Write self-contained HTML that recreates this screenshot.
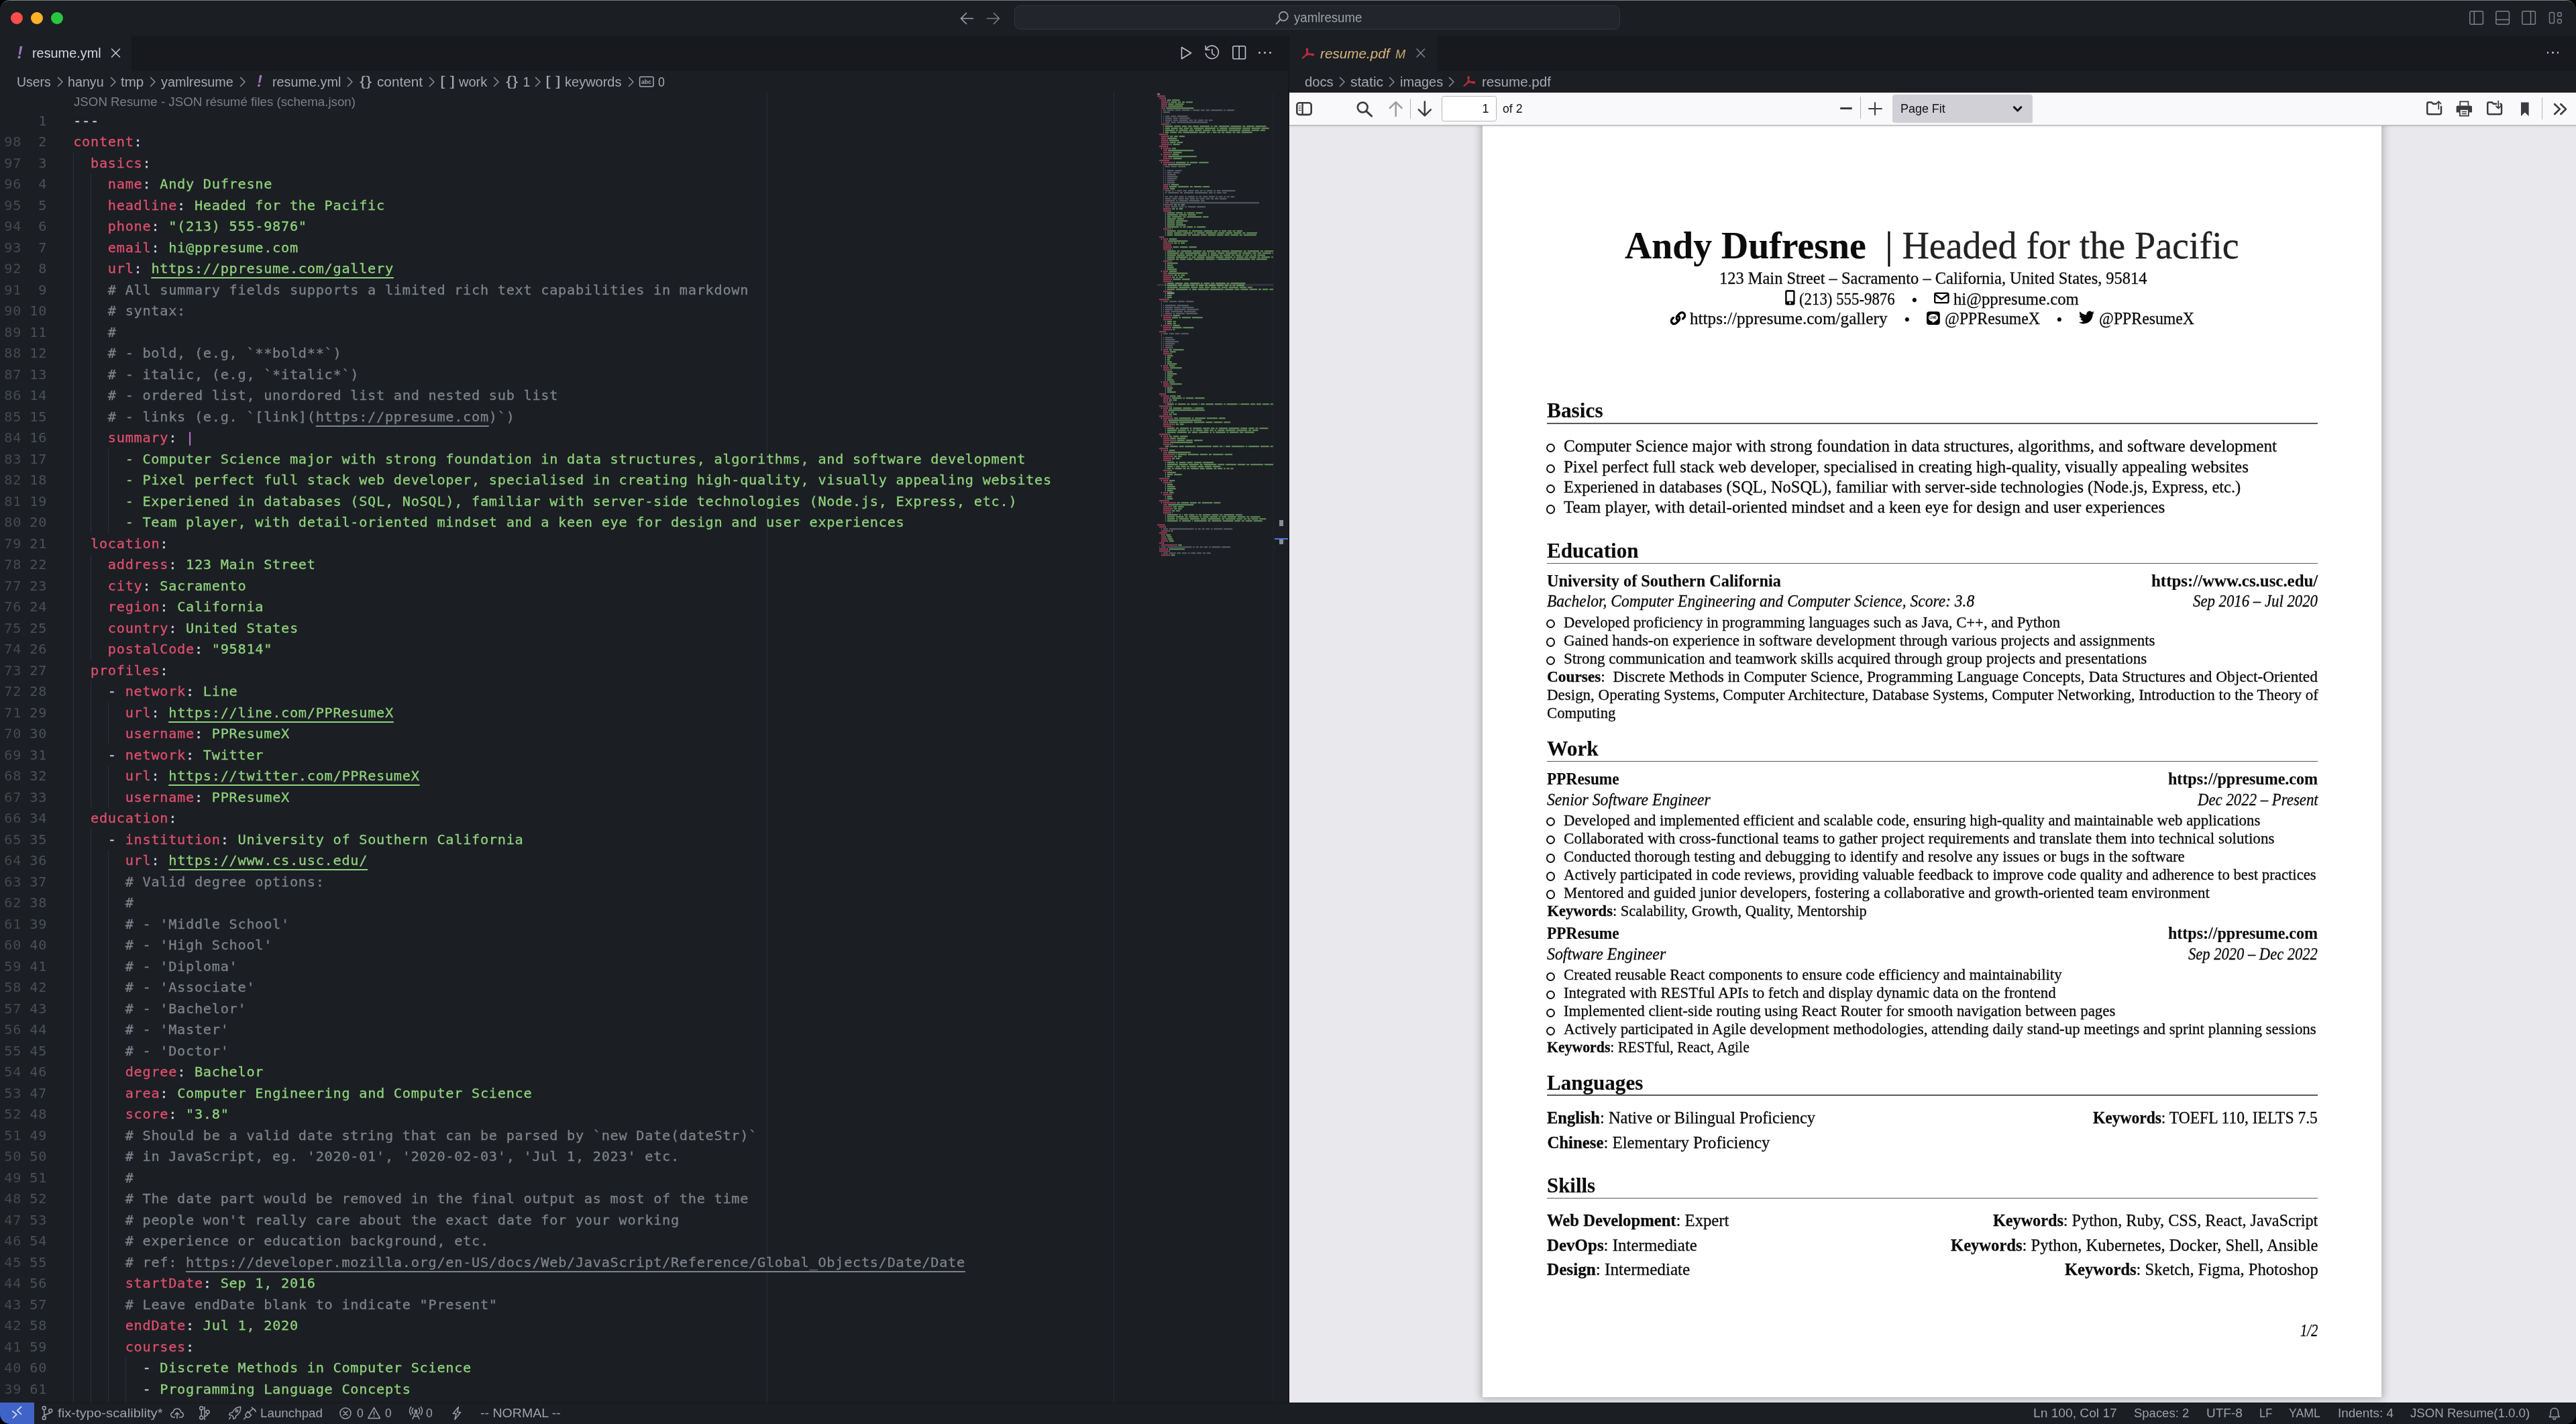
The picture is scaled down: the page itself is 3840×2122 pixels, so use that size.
<!DOCTYPE html><html><head><meta charset="utf-8"><title>resume.yml — yamlresume</title><style>
html,body{margin:0;padding:0;background:#000;}
body{width:3840px;height:2122px;overflow:hidden;position:relative;}
#win{position:absolute;left:0;top:0;width:3840px;height:2122px;background:#1b1e23;overflow:hidden;border-radius:15px;will-change:transform;}
.t{position:absolute;white-space:pre;margin:0;padding:0;}
.bl{display:inline-block;width:0;height:0;vertical-align:baseline;}
.cl{position:absolute;left:109.2px;white-space:pre;height:31.5px;line-height:31.5px;-webkit-text-stroke:0.3px;}
.ln{position:absolute;white-space:pre;height:31.5px;line-height:31.5px;text-align:right;}
.k{color:#df4f6e}.s{color:#8fd27c}.p{color:#cdd1d9}.c{color:#7e828b}.u{text-decoration:underline;text-underline-offset:5.5px;text-decoration-thickness:1.5px}.m{color:#c678dd}

</style></head><body><div id="win">
<div style="position:absolute;left:0px;top:52.5px;width:3840px;height:53.0px;background:#17191e;"></div>
<div style="position:absolute;left:0px;top:52.5px;width:196px;height:53.0px;background:#1b1e23;"></div>
<div style="position:absolute;left:1921.5px;top:52.5px;width:220.5px;height:53.0px;background:#1b1e23;"></div>
<div style="position:absolute;left:1920.0px;top:52.5px;width:1.5px;height:2037.0px;background:#15171c;"></div>
<div style="position:absolute;left:1512px;top:8px;width:902.5px;height:35.5px;box-sizing:border-box;border:1.5px solid #32353c;border-radius:9px;background:#22252c"></div>
<div style="position:absolute;left:16.1px;top:18.2px;width:18px;height:18px;border-radius:50%;background:#fd4c49"></div>
<div style="position:absolute;left:46.3px;top:18.2px;width:18px;height:18px;border-radius:50%;background:#fdb325"></div>
<div style="position:absolute;left:76.2px;top:18.2px;width:18px;height:18px;border-radius:50%;background:#29c73c"></div>
<svg style="position:absolute;left:1428px;top:15px;" width="30" height="26" viewBox="0 0 30 26"><path d="M22.5 12.5H5M12.5 4.5L4.5 12.5L12.5 20.5" fill="none" stroke="#9da1a9" stroke-width="1.7" stroke-linecap="round" stroke-linejoin="round" /></svg>
<svg style="position:absolute;left:1467px;top:15px;" width="30" height="26" viewBox="0 0 30 26"><path d="M4.5 12.5H22M14.5 4.5L22.5 12.5L14.5 20.5" fill="none" stroke="#797d85" stroke-width="1.7" stroke-linecap="round" stroke-linejoin="round" /></svg>
<svg style="position:absolute;left:1898px;top:13px;" width="28" height="28" viewBox="0 0 28 28"><circle cx="15.3" cy="11.3" r="6.6" fill="none" stroke="#9da1a9" stroke-width="1.7"/><path d="M10.6 16L4.6 22.6" stroke="#9da1a9" stroke-width="1.9" stroke-linecap="round"/></svg>
<svg style="position:absolute;left:3679px;top:14px;" width="26" height="26" viewBox="0 0 26 26"><rect x="2.8" y="2.7" width="19.6" height="19.6" rx="2.2" fill="none" stroke="#7c8088" stroke-width="1.5"/><path d="M9.3 2.7V22.3" stroke="#7c8088" stroke-width="1.5"/></svg>
<svg style="position:absolute;left:3718px;top:14px;" width="26" height="26" viewBox="0 0 26 26"><rect x="2.8" y="2.7" width="19.6" height="19.6" rx="2.2" fill="none" stroke="#7c8088" stroke-width="1.5"/><path d="M2.8 15.4H22.4" stroke="#7c8088" stroke-width="1.5"/></svg>
<svg style="position:absolute;left:3757px;top:14px;" width="26" height="26" viewBox="0 0 26 26"><rect x="2.8" y="2.7" width="19.6" height="19.6" rx="2.2" fill="none" stroke="#7c8088" stroke-width="1.5"/><path d="M15.5 2.7V22.3" stroke="#7c8088" stroke-width="1.5"/></svg>
<svg style="position:absolute;left:3796px;top:14px;" width="26" height="26" viewBox="0 0 26 26"><rect x="4.5" y="4.5" width="7" height="16" rx="1.8" fill="none" stroke="#7c8088" stroke-width="1.5"/><rect x="16.6" y="4.7" width="5.6" height="5.6" rx="1.6" fill="none" stroke="#7c8088" stroke-width="1.5"/><rect x="16.6" y="14.8" width="5.6" height="5.6" rx="1.6" fill="none" stroke="#7c8088" stroke-width="1.5"/></svg>
<svg style="position:absolute;left:164px;top:70px;" width="18" height="18" viewBox="0 0 18 18"><path d="M2.5 3L14.5 15M14.5 3L2.5 15" fill="none" stroke="#c8ccd4" stroke-width="1.5" stroke-linecap="round" stroke-linejoin="round" /></svg>
<svg style="position:absolute;left:1757px;top:66px;" width="24" height="26" viewBox="0 0 24 26"><path d="M4.5 4.5L18.5 13L4.5 21.5Z" fill="none" stroke="#c0c4cc" stroke-width="1.6" stroke-linecap="round" stroke-linejoin="round" /></svg>
<svg style="position:absolute;left:1793px;top:66px;" width="28" height="26" viewBox="0 0 28 26"><path d="M5.2 7.5A9.6 9.6 0 1 1 4.4 13.8" fill="none" stroke="#c0c4cc" stroke-width="1.6" stroke-linecap="round"/><path d="M4.3 2.6V8.3H10" fill="none" stroke="#c0c4cc" stroke-width="1.6" stroke-linecap="round" stroke-linejoin="round"/><path d="M13.8 7.5V13.5L17.6 16.6" fill="none" stroke="#c0c4cc" stroke-width="1.6" stroke-linecap="round" stroke-linejoin="round"/></svg>
<svg style="position:absolute;left:1835px;top:66px;" width="24" height="26" viewBox="0 0 24 26"><rect x="2.9" y="2.8" width="18.6" height="19" rx="2" fill="none" stroke="#c0c4cc" stroke-width="1.6"/><path d="M12.2 2.8V21.8" stroke="#c0c4cc" stroke-width="1.6"/></svg>
<div style="position:absolute;left:1876.0px;top:77.0px;width:3px;height:3px;border-radius:50%;background:#c0c4cc"></div>
<div style="position:absolute;left:1883.8px;top:77.0px;width:3px;height:3px;border-radius:50%;background:#c0c4cc"></div>
<div style="position:absolute;left:1891.7px;top:77.0px;width:3px;height:3px;border-radius:50%;background:#c0c4cc"></div>
<svg style="position:absolute;left:83.5px;top:112.5px;" width="12" height="18" viewBox="0 0 12 18"><path d="M2.5 2.5L9 9L2.5 15.5" fill="none" stroke="#8b8f97" stroke-width="1.5" stroke-linecap="round" stroke-linejoin="round" /></svg>
<svg style="position:absolute;left:162.5px;top:112.5px;" width="12" height="18" viewBox="0 0 12 18"><path d="M2.5 2.5L9 9L2.5 15.5" fill="none" stroke="#8b8f97" stroke-width="1.5" stroke-linecap="round" stroke-linejoin="round" /></svg>
<svg style="position:absolute;left:221.6px;top:112.5px;" width="12" height="18" viewBox="0 0 12 18"><path d="M2.5 2.5L9 9L2.5 15.5" fill="none" stroke="#8b8f97" stroke-width="1.5" stroke-linecap="round" stroke-linejoin="round" /></svg>
<svg style="position:absolute;left:355.8px;top:112.5px;" width="12" height="18" viewBox="0 0 12 18"><path d="M2.5 2.5L9 9L2.5 15.5" fill="none" stroke="#8b8f97" stroke-width="1.5" stroke-linecap="round" stroke-linejoin="round" /></svg>
<svg style="position:absolute;left:515.8px;top:112.5px;" width="12" height="18" viewBox="0 0 12 18"><path d="M2.5 2.5L9 9L2.5 15.5" fill="none" stroke="#8b8f97" stroke-width="1.5" stroke-linecap="round" stroke-linejoin="round" /></svg>
<svg style="position:absolute;left:638px;top:112.5px;" width="12" height="18" viewBox="0 0 12 18"><path d="M2.5 2.5L9 9L2.5 15.5" fill="none" stroke="#8b8f97" stroke-width="1.5" stroke-linecap="round" stroke-linejoin="round" /></svg>
<svg style="position:absolute;left:734.4px;top:112.5px;" width="12" height="18" viewBox="0 0 12 18"><path d="M2.5 2.5L9 9L2.5 15.5" fill="none" stroke="#8b8f97" stroke-width="1.5" stroke-linecap="round" stroke-linejoin="round" /></svg>
<svg style="position:absolute;left:795.5px;top:112.5px;" width="12" height="18" viewBox="0 0 12 18"><path d="M2.5 2.5L9 9L2.5 15.5" fill="none" stroke="#8b8f97" stroke-width="1.5" stroke-linecap="round" stroke-linejoin="round" /></svg>
<svg style="position:absolute;left:934.6px;top:112.5px;" width="12" height="18" viewBox="0 0 12 18"><path d="M2.5 2.5L9 9L2.5 15.5" fill="none" stroke="#8b8f97" stroke-width="1.5" stroke-linecap="round" stroke-linejoin="round" /></svg>
<svg style="position:absolute;left:952px;top:111px;" width="24" height="22" viewBox="0 0 24 22"><rect x="1.6" y="3.4" width="20.4" height="14.6" rx="2" fill="none" stroke="#a6a9b0" stroke-width="1.5"/><text x="4" y="13.6" font-family="Liberation Sans" font-weight="700" font-size="8.5" fill="#a6a9b0">abc</text></svg>
<svg style="position:absolute;left:1939.5px;top:69.5px;" width="20.0" height="19.0" viewBox="0 0 20 19"><path d="M2 16.5C5.5 14.5 8.2 9.5 9.3 4.2C9.7 2 7.6 1.6 7.5 3.6C7.3 7.5 11.5 11.8 16.6 12.4C19 12.6 19 10.6 16.8 10.5C11.5 10.3 5.5 12.6 2.6 15.4C1.2 16.8 1.2 17.2 2 16.5Z" fill="none" stroke="#bd2b3b" stroke-width="1.9" stroke-linejoin="round" stroke-linecap="round"/></svg>
<svg style="position:absolute;left:2108.5px;top:70px;" width="18" height="18" viewBox="0 0 18 18"><path d="M3 3L14.6 15M14.6 3L3 15" fill="none" stroke="#7e828b" stroke-width="1.5" stroke-linecap="round" stroke-linejoin="round" /></svg>
<div style="position:absolute;left:3796.6px;top:77.39999999999999px;width:2.8px;height:2.8px;border-radius:50%;background:#c0c4cc"></div>
<div style="position:absolute;left:3804.1px;top:77.39999999999999px;width:2.8px;height:2.8px;border-radius:50%;background:#c0c4cc"></div>
<div style="position:absolute;left:3811.6px;top:77.39999999999999px;width:2.8px;height:2.8px;border-radius:50%;background:#c0c4cc"></div>
<svg style="position:absolute;left:1994.8px;top:112.5px;" width="12" height="18" viewBox="0 0 12 18"><path d="M2.5 2.5L9 9L2.5 15.5" fill="none" stroke="#8b8f97" stroke-width="1.5" stroke-linecap="round" stroke-linejoin="round" /></svg>
<svg style="position:absolute;left:2068.9px;top:112.5px;" width="12" height="18" viewBox="0 0 12 18"><path d="M2.5 2.5L9 9L2.5 15.5" fill="none" stroke="#8b8f97" stroke-width="1.5" stroke-linecap="round" stroke-linejoin="round" /></svg>
<svg style="position:absolute;left:2158.2px;top:112.5px;" width="12" height="18" viewBox="0 0 12 18"><path d="M2.5 2.5L9 9L2.5 15.5" fill="none" stroke="#8b8f97" stroke-width="1.5" stroke-linecap="round" stroke-linejoin="round" /></svg>
<svg style="position:absolute;left:2180.5px;top:112px;" width="19.0" height="18.05" viewBox="0 0 20 19"><path d="M2 16.5C5.5 14.5 8.2 9.5 9.3 4.2C9.7 2 7.6 1.6 7.5 3.6C7.3 7.5 11.5 11.8 16.6 12.4C19 12.6 19 10.6 16.8 10.5C11.5 10.3 5.5 12.6 2.6 15.4C1.2 16.8 1.2 17.2 2 16.5Z" fill="none" stroke="#bd2b3b" stroke-width="1.9" stroke-linejoin="round" stroke-linecap="round"/></svg>
<div style="position:absolute;left:0px;top:2089.5px;width:3840px;height:32.5px;background:#1b1e23;"></div>
<div style="position:absolute;left:0px;top:2089.5px;width:3840px;height:1.2px;background:#14161a;"></div>
<div style="position:absolute;left:0px;top:2090.0px;width:50.9px;height:32.5px;background:#3f63c6;"></div>
<svg style="position:absolute;left:15px;top:2092px;" width="22" height="26" viewBox="0 0 22 26"><path d="M3.8 10.8L9.8 15.8L4.4 21M16.6 4.4L10.8 9.9L16.4 15.4" fill="none" stroke="#d6e2ff" stroke-width="1.7" stroke-linecap="round" stroke-linejoin="round" /></svg>
<svg style="position:absolute;left:60px;top:2093px;" width="22" height="26" viewBox="0 0 22 26"><g fill="none" stroke="#9ea2aa" stroke-width="1.5"><circle cx="5.8" cy="5.3" r="2.5"/><circle cx="5.8" cy="20.1" r="2.5"/><circle cx="15.2" cy="9.2" r="2.5"/><path d="M5.8 7.8V17.6M15.2 11.7C15.2 14.6 5.8 13.6 5.8 17.6"/></g></svg>
<svg style="position:absolute;left:252px;top:2094px;" width="24" height="24" viewBox="0 0 24 24"><g fill="none" stroke="#9ea2aa" stroke-width="1.5" stroke-linecap="round" stroke-linejoin="round"><path d="M8.4 18H6.8C4.4 18 2.8 16.3 2.8 14.2C2.8 12.2 4.3 10.7 6.2 10.5C6.6 7.4 9 5.2 12 5.2C15 5.2 17.4 7.4 17.8 10.5C19.7 10.7 21.2 12.2 21.2 14.2C21.2 16.3 19.6 18 17.2 18H15.6"/><path d="M12 19.5V11.5M9 14L12 11L15 14"/></g></svg>
<svg style="position:absolute;left:294px;top:2093px;" width="22" height="26" viewBox="0 0 22 26"><g fill="none" stroke="#9ea2aa" stroke-width="1.5" stroke-linecap="round"><circle cx="6.2" cy="5.4" r="2.5"/><circle cx="6.2" cy="19.4" r="2.5"/><circle cx="15.6" cy="11" r="2.5"/><path d="M6.2 8V16.8M11 3.6V22.4M15.6 13.6C15.6 16 13.5 17.4 11 17.6"/></g></svg>
<svg style="position:absolute;left:339px;top:2094px;" width="22" height="24" viewBox="0 0 22 24"><g fill="none" stroke="#9ea2aa" stroke-width="1.5" stroke-linecap="round" stroke-linejoin="round"><path d="M19.6 2.6C14.6 2.6 10.4 5.4 7.6 10.6L4 11.6L2.6 14.4L6.4 15L8.4 17L9 20.6L11.8 19.4L12.8 15.8C17.8 12.8 20 8.4 19.6 2.6Z"/><circle cx="14" cy="8.6" r="1.7"/><path d="M4.6 17.6L2.6 20.6"/></g></svg>
<svg style="position:absolute;left:361px;top:2094px;" width="22" height="24" viewBox="0 0 22 24"><g fill="none" stroke="#9ea2aa" stroke-width="1.5" stroke-linecap="round" stroke-linejoin="round"><path d="M8.2 9.4L13.6 14.8L11.4 17C9.8 18.6 7.6 18.6 6.2 17.2C4.8 15.8 4.8 13.6 6.2 12.2Z"/><path d="M10 11L14.2 6.8C15.6 5.4 17.8 5.4 19 6.6"/><path d="M5.6 17.8L2.6 20.8M14.4 3.2L16.6 5.4M18.4 7.4L20.4 9.4"/></g></svg>
<svg style="position:absolute;left:504px;top:2094px;" width="24" height="24" viewBox="0 0 24 24"><g fill="none" stroke="#9ea2aa" stroke-width="1.5" stroke-linecap="round"><circle cx="11" cy="12" r="8"/><path d="M8 9L14 15M14 9L8 15"/></g></svg>
<svg style="position:absolute;left:546px;top:2094px;" width="24" height="24" viewBox="0 0 24 24"><g fill="none" stroke="#9ea2aa" stroke-width="1.5" stroke-linecap="round" stroke-linejoin="round"><path d="M11.6 3.6L20.4 19.4H2.8Z"/><path d="M11.6 9.4V14.2M11.6 16.6V16.8"/></g></svg>
<svg style="position:absolute;left:608px;top:2094px;" width="24" height="24" viewBox="0 0 24 24"><g fill="none" stroke="#9ea2aa" stroke-width="1.5" stroke-linecap="round" stroke-linejoin="round"><path d="M12 9.5L7 20.5M12 9.5L17 20.5M9 16.5H15"/><circle cx="12" cy="8.5" r="1.6"/><path d="M7.8 12.4C5.8 10 5.8 6.8 7.8 4.4M16.2 12.4C18.2 10 18.2 6.8 16.2 4.4M4.8 14.4C1.8 11 1.8 6 4.8 2.6M19.2 14.4C22.2 11 22.2 6 19.2 2.6"/></g></svg>
<svg style="position:absolute;left:672px;top:2094px;" width="18" height="24" viewBox="0 0 18 24"><path d="M11.4 2.6L3.4 12.4H8.2L6 21.2L14.6 10.6H9.8Z" fill="none" stroke="#9ea2aa" stroke-width="1.5" stroke-linecap="round" stroke-linejoin="round" /></svg>
<svg style="position:absolute;left:3796px;top:2094px;" width="24" height="24" viewBox="0 0 24 24"><g fill="none" stroke="#9ea2aa" stroke-width="1.5" stroke-linecap="round" stroke-linejoin="round"><path d="M4.4 17.4H19.2C17.6 15.8 17.4 14.4 17.4 10.6C17.4 7 15 4.4 11.8 4.4C8.6 4.4 6.2 7 6.2 10.6C6.2 14.4 6 15.8 4.4 17.4Z"/><path d="M9.8 19.6C10.2 20.6 10.9 21 11.8 21C12.7 21 13.4 20.6 13.8 19.6"/></g></svg>
<div id="code" style="position:absolute;left:0;top:0;width:1920.0px;height:2089.5px;overflow:hidden;font-family:'DejaVu Sans Mono', 'Liberation Mono', monospace;font-size:20.3px;letter-spacing:0.699px">
<div style="position:absolute;left:1142.8px;top:138px;width:1.2px;height:1951.5px;background:#2a2d34"></div>
<div style="position:absolute;left:1659.6px;top:138px;width:1.2px;height:1951.5px;background:#2a2d34"></div>
<div style="position:absolute;left:109.2px;top:227.65px;width:1.3px;height:31.5px;background:#2d3037"></div>
<div style="position:absolute;left:109.2px;top:259.15px;width:1.3px;height:31.5px;background:#2d3037"></div>
<div style="position:absolute;left:135.0px;top:259.15px;width:1.3px;height:31.5px;background:#2d3037"></div>
<div style="position:absolute;left:109.2px;top:290.65px;width:1.3px;height:31.5px;background:#2d3037"></div>
<div style="position:absolute;left:135.0px;top:290.65px;width:1.3px;height:31.5px;background:#2d3037"></div>
<div style="position:absolute;left:109.2px;top:322.15px;width:1.3px;height:31.5px;background:#2d3037"></div>
<div style="position:absolute;left:135.0px;top:322.15px;width:1.3px;height:31.5px;background:#2d3037"></div>
<div style="position:absolute;left:109.2px;top:353.65px;width:1.3px;height:31.5px;background:#2d3037"></div>
<div style="position:absolute;left:135.0px;top:353.65px;width:1.3px;height:31.5px;background:#2d3037"></div>
<div style="position:absolute;left:109.2px;top:385.15px;width:1.3px;height:31.5px;background:#2d3037"></div>
<div style="position:absolute;left:135.0px;top:385.15px;width:1.3px;height:31.5px;background:#2d3037"></div>
<div style="position:absolute;left:109.2px;top:416.65px;width:1.3px;height:31.5px;background:#2d3037"></div>
<div style="position:absolute;left:135.0px;top:416.65px;width:1.3px;height:31.5px;background:#2d3037"></div>
<div style="position:absolute;left:109.2px;top:448.15px;width:1.3px;height:31.5px;background:#2d3037"></div>
<div style="position:absolute;left:135.0px;top:448.15px;width:1.3px;height:31.5px;background:#2d3037"></div>
<div style="position:absolute;left:109.2px;top:479.65px;width:1.3px;height:31.5px;background:#2d3037"></div>
<div style="position:absolute;left:135.0px;top:479.65px;width:1.3px;height:31.5px;background:#2d3037"></div>
<div style="position:absolute;left:109.2px;top:511.15px;width:1.3px;height:31.5px;background:#2d3037"></div>
<div style="position:absolute;left:135.0px;top:511.15px;width:1.3px;height:31.5px;background:#2d3037"></div>
<div style="position:absolute;left:109.2px;top:542.65px;width:1.3px;height:31.5px;background:#2d3037"></div>
<div style="position:absolute;left:135.0px;top:542.65px;width:1.3px;height:31.5px;background:#2d3037"></div>
<div style="position:absolute;left:109.2px;top:574.15px;width:1.3px;height:31.5px;background:#2d3037"></div>
<div style="position:absolute;left:135.0px;top:574.15px;width:1.3px;height:31.5px;background:#2d3037"></div>
<div style="position:absolute;left:109.2px;top:605.65px;width:1.3px;height:31.5px;background:#2d3037"></div>
<div style="position:absolute;left:135.0px;top:605.65px;width:1.3px;height:31.5px;background:#2d3037"></div>
<div style="position:absolute;left:109.2px;top:637.15px;width:1.3px;height:31.5px;background:#2d3037"></div>
<div style="position:absolute;left:135.0px;top:637.15px;width:1.3px;height:31.5px;background:#2d3037"></div>
<div style="position:absolute;left:109.2px;top:668.65px;width:1.3px;height:31.5px;background:#2d3037"></div>
<div style="position:absolute;left:135.0px;top:668.65px;width:1.3px;height:31.5px;background:#2d3037"></div>
<div style="position:absolute;left:160.9px;top:668.65px;width:1.3px;height:31.5px;background:#2d3037"></div>
<div style="position:absolute;left:109.2px;top:700.15px;width:1.3px;height:31.5px;background:#2d3037"></div>
<div style="position:absolute;left:135.0px;top:700.15px;width:1.3px;height:31.5px;background:#2d3037"></div>
<div style="position:absolute;left:160.9px;top:700.15px;width:1.3px;height:31.5px;background:#2d3037"></div>
<div style="position:absolute;left:109.2px;top:731.65px;width:1.3px;height:31.5px;background:#2d3037"></div>
<div style="position:absolute;left:135.0px;top:731.65px;width:1.3px;height:31.5px;background:#2d3037"></div>
<div style="position:absolute;left:160.9px;top:731.65px;width:1.3px;height:31.5px;background:#2d3037"></div>
<div style="position:absolute;left:109.2px;top:763.15px;width:1.3px;height:31.5px;background:#2d3037"></div>
<div style="position:absolute;left:135.0px;top:763.15px;width:1.3px;height:31.5px;background:#2d3037"></div>
<div style="position:absolute;left:160.9px;top:763.15px;width:1.3px;height:31.5px;background:#2d3037"></div>
<div style="position:absolute;left:109.2px;top:794.65px;width:1.3px;height:31.5px;background:#2d3037"></div>
<div style="position:absolute;left:109.2px;top:826.15px;width:1.3px;height:31.5px;background:#2d3037"></div>
<div style="position:absolute;left:135.0px;top:826.15px;width:1.3px;height:31.5px;background:#2d3037"></div>
<div style="position:absolute;left:109.2px;top:857.65px;width:1.3px;height:31.5px;background:#2d3037"></div>
<div style="position:absolute;left:135.0px;top:857.65px;width:1.3px;height:31.5px;background:#2d3037"></div>
<div style="position:absolute;left:109.2px;top:889.15px;width:1.3px;height:31.5px;background:#2d3037"></div>
<div style="position:absolute;left:135.0px;top:889.15px;width:1.3px;height:31.5px;background:#2d3037"></div>
<div style="position:absolute;left:109.2px;top:920.65px;width:1.3px;height:31.5px;background:#2d3037"></div>
<div style="position:absolute;left:135.0px;top:920.65px;width:1.3px;height:31.5px;background:#2d3037"></div>
<div style="position:absolute;left:109.2px;top:952.15px;width:1.3px;height:31.5px;background:#2d3037"></div>
<div style="position:absolute;left:135.0px;top:952.15px;width:1.3px;height:31.5px;background:#2d3037"></div>
<div style="position:absolute;left:109.2px;top:983.65px;width:1.3px;height:31.5px;background:#2d3037"></div>
<div style="position:absolute;left:109.2px;top:1015.15px;width:1.3px;height:31.5px;background:#2d3037"></div>
<div style="position:absolute;left:135.0px;top:1015.15px;width:1.3px;height:31.5px;background:#2d3037"></div>
<div style="position:absolute;left:109.2px;top:1046.65px;width:1.3px;height:31.5px;background:#2d3037"></div>
<div style="position:absolute;left:135.0px;top:1046.65px;width:1.3px;height:31.5px;background:#2d3037"></div>
<div style="position:absolute;left:160.9px;top:1046.65px;width:1.3px;height:31.5px;background:#2d3037"></div>
<div style="position:absolute;left:109.2px;top:1078.15px;width:1.3px;height:31.5px;background:#2d3037"></div>
<div style="position:absolute;left:135.0px;top:1078.15px;width:1.3px;height:31.5px;background:#2d3037"></div>
<div style="position:absolute;left:160.9px;top:1078.15px;width:1.3px;height:31.5px;background:#2d3037"></div>
<div style="position:absolute;left:109.2px;top:1109.65px;width:1.3px;height:31.5px;background:#2d3037"></div>
<div style="position:absolute;left:135.0px;top:1109.65px;width:1.3px;height:31.5px;background:#2d3037"></div>
<div style="position:absolute;left:109.2px;top:1141.15px;width:1.3px;height:31.5px;background:#2d3037"></div>
<div style="position:absolute;left:135.0px;top:1141.15px;width:1.3px;height:31.5px;background:#2d3037"></div>
<div style="position:absolute;left:160.9px;top:1141.15px;width:1.3px;height:31.5px;background:#2d3037"></div>
<div style="position:absolute;left:109.2px;top:1172.65px;width:1.3px;height:31.5px;background:#2d3037"></div>
<div style="position:absolute;left:135.0px;top:1172.65px;width:1.3px;height:31.5px;background:#2d3037"></div>
<div style="position:absolute;left:160.9px;top:1172.65px;width:1.3px;height:31.5px;background:#2d3037"></div>
<div style="position:absolute;left:109.2px;top:1204.15px;width:1.3px;height:31.5px;background:#2d3037"></div>
<div style="position:absolute;left:109.2px;top:1235.65px;width:1.3px;height:31.5px;background:#2d3037"></div>
<div style="position:absolute;left:135.0px;top:1235.65px;width:1.3px;height:31.5px;background:#2d3037"></div>
<div style="position:absolute;left:109.2px;top:1267.15px;width:1.3px;height:31.5px;background:#2d3037"></div>
<div style="position:absolute;left:135.0px;top:1267.15px;width:1.3px;height:31.5px;background:#2d3037"></div>
<div style="position:absolute;left:160.9px;top:1267.15px;width:1.3px;height:31.5px;background:#2d3037"></div>
<div style="position:absolute;left:109.2px;top:1298.65px;width:1.3px;height:31.5px;background:#2d3037"></div>
<div style="position:absolute;left:135.0px;top:1298.65px;width:1.3px;height:31.5px;background:#2d3037"></div>
<div style="position:absolute;left:160.9px;top:1298.65px;width:1.3px;height:31.5px;background:#2d3037"></div>
<div style="position:absolute;left:109.2px;top:1330.15px;width:1.3px;height:31.5px;background:#2d3037"></div>
<div style="position:absolute;left:135.0px;top:1330.15px;width:1.3px;height:31.5px;background:#2d3037"></div>
<div style="position:absolute;left:160.9px;top:1330.15px;width:1.3px;height:31.5px;background:#2d3037"></div>
<div style="position:absolute;left:109.2px;top:1361.65px;width:1.3px;height:31.5px;background:#2d3037"></div>
<div style="position:absolute;left:135.0px;top:1361.65px;width:1.3px;height:31.5px;background:#2d3037"></div>
<div style="position:absolute;left:160.9px;top:1361.65px;width:1.3px;height:31.5px;background:#2d3037"></div>
<div style="position:absolute;left:109.2px;top:1393.15px;width:1.3px;height:31.5px;background:#2d3037"></div>
<div style="position:absolute;left:135.0px;top:1393.15px;width:1.3px;height:31.5px;background:#2d3037"></div>
<div style="position:absolute;left:160.9px;top:1393.15px;width:1.3px;height:31.5px;background:#2d3037"></div>
<div style="position:absolute;left:109.2px;top:1424.65px;width:1.3px;height:31.5px;background:#2d3037"></div>
<div style="position:absolute;left:135.0px;top:1424.65px;width:1.3px;height:31.5px;background:#2d3037"></div>
<div style="position:absolute;left:160.9px;top:1424.65px;width:1.3px;height:31.5px;background:#2d3037"></div>
<div style="position:absolute;left:109.2px;top:1456.15px;width:1.3px;height:31.5px;background:#2d3037"></div>
<div style="position:absolute;left:135.0px;top:1456.15px;width:1.3px;height:31.5px;background:#2d3037"></div>
<div style="position:absolute;left:160.9px;top:1456.15px;width:1.3px;height:31.5px;background:#2d3037"></div>
<div style="position:absolute;left:109.2px;top:1487.65px;width:1.3px;height:31.5px;background:#2d3037"></div>
<div style="position:absolute;left:135.0px;top:1487.65px;width:1.3px;height:31.5px;background:#2d3037"></div>
<div style="position:absolute;left:160.9px;top:1487.65px;width:1.3px;height:31.5px;background:#2d3037"></div>
<div style="position:absolute;left:109.2px;top:1519.15px;width:1.3px;height:31.5px;background:#2d3037"></div>
<div style="position:absolute;left:135.0px;top:1519.15px;width:1.3px;height:31.5px;background:#2d3037"></div>
<div style="position:absolute;left:160.9px;top:1519.15px;width:1.3px;height:31.5px;background:#2d3037"></div>
<div style="position:absolute;left:109.2px;top:1550.65px;width:1.3px;height:31.5px;background:#2d3037"></div>
<div style="position:absolute;left:135.0px;top:1550.65px;width:1.3px;height:31.5px;background:#2d3037"></div>
<div style="position:absolute;left:160.9px;top:1550.65px;width:1.3px;height:31.5px;background:#2d3037"></div>
<div style="position:absolute;left:109.2px;top:1582.15px;width:1.3px;height:31.5px;background:#2d3037"></div>
<div style="position:absolute;left:135.0px;top:1582.15px;width:1.3px;height:31.5px;background:#2d3037"></div>
<div style="position:absolute;left:160.9px;top:1582.15px;width:1.3px;height:31.5px;background:#2d3037"></div>
<div style="position:absolute;left:109.2px;top:1613.65px;width:1.3px;height:31.5px;background:#2d3037"></div>
<div style="position:absolute;left:135.0px;top:1613.65px;width:1.3px;height:31.5px;background:#2d3037"></div>
<div style="position:absolute;left:160.9px;top:1613.65px;width:1.3px;height:31.5px;background:#2d3037"></div>
<div style="position:absolute;left:109.2px;top:1645.15px;width:1.3px;height:31.5px;background:#2d3037"></div>
<div style="position:absolute;left:135.0px;top:1645.15px;width:1.3px;height:31.5px;background:#2d3037"></div>
<div style="position:absolute;left:160.9px;top:1645.15px;width:1.3px;height:31.5px;background:#2d3037"></div>
<div style="position:absolute;left:109.2px;top:1676.65px;width:1.3px;height:31.5px;background:#2d3037"></div>
<div style="position:absolute;left:135.0px;top:1676.65px;width:1.3px;height:31.5px;background:#2d3037"></div>
<div style="position:absolute;left:160.9px;top:1676.65px;width:1.3px;height:31.5px;background:#2d3037"></div>
<div style="position:absolute;left:109.2px;top:1708.15px;width:1.3px;height:31.5px;background:#2d3037"></div>
<div style="position:absolute;left:135.0px;top:1708.15px;width:1.3px;height:31.5px;background:#2d3037"></div>
<div style="position:absolute;left:160.9px;top:1708.15px;width:1.3px;height:31.5px;background:#2d3037"></div>
<div style="position:absolute;left:109.2px;top:1739.65px;width:1.3px;height:31.5px;background:#2d3037"></div>
<div style="position:absolute;left:135.0px;top:1739.65px;width:1.3px;height:31.5px;background:#2d3037"></div>
<div style="position:absolute;left:160.9px;top:1739.65px;width:1.3px;height:31.5px;background:#2d3037"></div>
<div style="position:absolute;left:109.2px;top:1771.15px;width:1.3px;height:31.5px;background:#2d3037"></div>
<div style="position:absolute;left:135.0px;top:1771.15px;width:1.3px;height:31.5px;background:#2d3037"></div>
<div style="position:absolute;left:160.9px;top:1771.15px;width:1.3px;height:31.5px;background:#2d3037"></div>
<div style="position:absolute;left:109.2px;top:1802.65px;width:1.3px;height:31.5px;background:#2d3037"></div>
<div style="position:absolute;left:135.0px;top:1802.65px;width:1.3px;height:31.5px;background:#2d3037"></div>
<div style="position:absolute;left:160.9px;top:1802.65px;width:1.3px;height:31.5px;background:#2d3037"></div>
<div style="position:absolute;left:109.2px;top:1834.15px;width:1.3px;height:31.5px;background:#2d3037"></div>
<div style="position:absolute;left:135.0px;top:1834.15px;width:1.3px;height:31.5px;background:#2d3037"></div>
<div style="position:absolute;left:160.9px;top:1834.15px;width:1.3px;height:31.5px;background:#2d3037"></div>
<div style="position:absolute;left:109.2px;top:1865.65px;width:1.3px;height:31.5px;background:#2d3037"></div>
<div style="position:absolute;left:135.0px;top:1865.65px;width:1.3px;height:31.5px;background:#2d3037"></div>
<div style="position:absolute;left:160.9px;top:1865.65px;width:1.3px;height:31.5px;background:#2d3037"></div>
<div style="position:absolute;left:109.2px;top:1897.15px;width:1.3px;height:31.5px;background:#2d3037"></div>
<div style="position:absolute;left:135.0px;top:1897.15px;width:1.3px;height:31.5px;background:#2d3037"></div>
<div style="position:absolute;left:160.9px;top:1897.15px;width:1.3px;height:31.5px;background:#2d3037"></div>
<div style="position:absolute;left:109.2px;top:1928.65px;width:1.3px;height:31.5px;background:#2d3037"></div>
<div style="position:absolute;left:135.0px;top:1928.65px;width:1.3px;height:31.5px;background:#2d3037"></div>
<div style="position:absolute;left:160.9px;top:1928.65px;width:1.3px;height:31.5px;background:#2d3037"></div>
<div style="position:absolute;left:109.2px;top:1960.15px;width:1.3px;height:31.5px;background:#2d3037"></div>
<div style="position:absolute;left:135.0px;top:1960.15px;width:1.3px;height:31.5px;background:#2d3037"></div>
<div style="position:absolute;left:160.9px;top:1960.15px;width:1.3px;height:31.5px;background:#2d3037"></div>
<div style="position:absolute;left:109.2px;top:1991.65px;width:1.3px;height:31.5px;background:#2d3037"></div>
<div style="position:absolute;left:135.0px;top:1991.65px;width:1.3px;height:31.5px;background:#2d3037"></div>
<div style="position:absolute;left:160.9px;top:1991.65px;width:1.3px;height:31.5px;background:#2d3037"></div>
<div style="position:absolute;left:109.2px;top:2023.15px;width:1.3px;height:31.5px;background:#2d3037"></div>
<div style="position:absolute;left:135.0px;top:2023.15px;width:1.3px;height:31.5px;background:#2d3037"></div>
<div style="position:absolute;left:160.9px;top:2023.15px;width:1.3px;height:31.5px;background:#2d3037"></div>
<div style="position:absolute;left:186.7px;top:2023.15px;width:1.3px;height:31.5px;background:#2d3037"></div>
<div style="position:absolute;left:109.2px;top:2054.65px;width:1.3px;height:31.5px;background:#2d3037"></div>
<div style="position:absolute;left:135.0px;top:2054.65px;width:1.3px;height:31.5px;background:#2d3037"></div>
<div style="position:absolute;left:160.9px;top:2054.65px;width:1.3px;height:31.5px;background:#2d3037"></div>
<div style="position:absolute;left:186.7px;top:2054.65px;width:1.3px;height:31.5px;background:#2d3037"></div>
<div style="position:absolute;left:109.2px;top:2086.15px;width:1.3px;height:31.5px;background:#2d3037"></div>
<div style="position:absolute;left:135.0px;top:2086.15px;width:1.3px;height:31.5px;background:#2d3037"></div>
<div style="position:absolute;left:160.9px;top:2086.15px;width:1.3px;height:31.5px;background:#2d3037"></div>
<div style="position:absolute;left:186.7px;top:2086.15px;width:1.3px;height:31.5px;background:#2d3037"></div>
<div class="cl" style="top:164.65px"><span class="p">---</span></div>
<div class="ln" style="top:164.65px;left:20px;width:50.20px;color:#4c5059">1</div>
<div class="cl" style="top:196.15px"><span class="k">content</span><span class="p">:</span></div>
<div class="ln" style="top:196.15px;left:20px;width:50.20px;color:#4c5059">2</div>
<div class="ln" style="top:196.15px;left:0;width:32.20px;color:#454952">98</div>
<div class="cl" style="top:227.65px">  <span class="k">basics</span><span class="p">:</span></div>
<div class="ln" style="top:227.65px;left:20px;width:50.20px;color:#4c5059">3</div>
<div class="ln" style="top:227.65px;left:0;width:32.20px;color:#454952">97</div>
<div class="cl" style="top:259.15px">    <span class="k">name</span><span class="p">: </span><span class="s">Andy Dufresne</span></div>
<div class="ln" style="top:259.15px;left:20px;width:50.20px;color:#4c5059">4</div>
<div class="ln" style="top:259.15px;left:0;width:32.20px;color:#454952">96</div>
<div class="cl" style="top:290.65px">    <span class="k">headline</span><span class="p">: </span><span class="s">Headed for the Pacific</span></div>
<div class="ln" style="top:290.65px;left:20px;width:50.20px;color:#4c5059">5</div>
<div class="ln" style="top:290.65px;left:0;width:32.20px;color:#454952">95</div>
<div class="cl" style="top:322.15px">    <span class="k">phone</span><span class="p">: </span><span class="s">"(213) 555-9876"</span></div>
<div class="ln" style="top:322.15px;left:20px;width:50.20px;color:#4c5059">6</div>
<div class="ln" style="top:322.15px;left:0;width:32.20px;color:#454952">94</div>
<div class="cl" style="top:353.65px">    <span class="k">email</span><span class="p">: </span><span class="s">hi@ppresume.com</span></div>
<div class="ln" style="top:353.65px;left:20px;width:50.20px;color:#4c5059">7</div>
<div class="ln" style="top:353.65px;left:0;width:32.20px;color:#454952">93</div>
<div class="cl" style="top:385.15px">    <span class="k">url</span><span class="p">: </span><span class="s u">https://ppresume.com/gallery</span></div>
<div class="ln" style="top:385.15px;left:20px;width:50.20px;color:#4c5059">8</div>
<div class="ln" style="top:385.15px;left:0;width:32.20px;color:#454952">92</div>
<div class="cl" style="top:416.65px">    <span class="c"># All summary fields supports a limited rich text capabilities in markdown</span></div>
<div class="ln" style="top:416.65px;left:20px;width:50.20px;color:#4c5059">9</div>
<div class="ln" style="top:416.65px;left:0;width:32.20px;color:#454952">91</div>
<div class="cl" style="top:448.15px">    <span class="c"># syntax:</span></div>
<div class="ln" style="top:448.15px;left:20px;width:50.20px;color:#4c5059">10</div>
<div class="ln" style="top:448.15px;left:0;width:32.20px;color:#454952">90</div>
<div class="cl" style="top:479.65px">    <span class="c">#</span></div>
<div class="ln" style="top:479.65px;left:20px;width:50.20px;color:#4c5059">11</div>
<div class="ln" style="top:479.65px;left:0;width:32.20px;color:#454952">89</div>
<div class="cl" style="top:511.15px">    <span class="c"># - bold, (e.g, `**bold**`)</span></div>
<div class="ln" style="top:511.15px;left:20px;width:50.20px;color:#4c5059">12</div>
<div class="ln" style="top:511.15px;left:0;width:32.20px;color:#454952">88</div>
<div class="cl" style="top:542.65px">    <span class="c"># - italic, (e.g, `*italic*`)</span></div>
<div class="ln" style="top:542.65px;left:20px;width:50.20px;color:#4c5059">13</div>
<div class="ln" style="top:542.65px;left:0;width:32.20px;color:#454952">87</div>
<div class="cl" style="top:574.15px">    <span class="c"># - ordered list, unordored list and nested sub list</span></div>
<div class="ln" style="top:574.15px;left:20px;width:50.20px;color:#4c5059">14</div>
<div class="ln" style="top:574.15px;left:0;width:32.20px;color:#454952">86</div>
<div class="cl" style="top:605.65px">    <span class="c"># - links (e.g. `[link](</span><span class="c u">https://ppresume.com</span><span class="c">)`)</span></div>
<div class="ln" style="top:605.65px;left:20px;width:50.20px;color:#4c5059">15</div>
<div class="ln" style="top:605.65px;left:0;width:32.20px;color:#454952">85</div>
<div class="cl" style="top:637.15px">    <span class="k">summary</span><span class="p">: </span><span class="m">|</span></div>
<div class="ln" style="top:637.15px;left:20px;width:50.20px;color:#4c5059">16</div>
<div class="ln" style="top:637.15px;left:0;width:32.20px;color:#454952">84</div>
<div class="cl" style="top:668.65px"><span class="s">      - Computer Science major with strong foundation in data structures, algorithms, and software development</span></div>
<div class="ln" style="top:668.65px;left:20px;width:50.20px;color:#4c5059">17</div>
<div class="ln" style="top:668.65px;left:0;width:32.20px;color:#454952">83</div>
<div class="cl" style="top:700.15px"><span class="s">      - Pixel perfect full stack web developer, specialised in creating high-quality, visually appealing websites</span></div>
<div class="ln" style="top:700.15px;left:20px;width:50.20px;color:#4c5059">18</div>
<div class="ln" style="top:700.15px;left:0;width:32.20px;color:#454952">82</div>
<div class="cl" style="top:731.65px"><span class="s">      - Experiened in databases (SQL, NoSQL), familiar with server-side technologies (Node.js, Express, etc.)</span></div>
<div class="ln" style="top:731.65px;left:20px;width:50.20px;color:#4c5059">19</div>
<div class="ln" style="top:731.65px;left:0;width:32.20px;color:#454952">81</div>
<div class="cl" style="top:763.15px"><span class="s">      - Team player, with detail-oriented mindset and a keen eye for design and user experiences</span></div>
<div class="ln" style="top:763.15px;left:20px;width:50.20px;color:#4c5059">20</div>
<div class="ln" style="top:763.15px;left:0;width:32.20px;color:#454952">80</div>
<div class="cl" style="top:794.65px">  <span class="k">location</span><span class="p">:</span></div>
<div class="ln" style="top:794.65px;left:20px;width:50.20px;color:#4c5059">21</div>
<div class="ln" style="top:794.65px;left:0;width:32.20px;color:#454952">79</div>
<div class="cl" style="top:826.15px">    <span class="k">address</span><span class="p">: </span><span class="s">123 Main Street</span></div>
<div class="ln" style="top:826.15px;left:20px;width:50.20px;color:#4c5059">22</div>
<div class="ln" style="top:826.15px;left:0;width:32.20px;color:#454952">78</div>
<div class="cl" style="top:857.65px">    <span class="k">city</span><span class="p">: </span><span class="s">Sacramento</span></div>
<div class="ln" style="top:857.65px;left:20px;width:50.20px;color:#4c5059">23</div>
<div class="ln" style="top:857.65px;left:0;width:32.20px;color:#454952">77</div>
<div class="cl" style="top:889.15px">    <span class="k">region</span><span class="p">: </span><span class="s">California</span></div>
<div class="ln" style="top:889.15px;left:20px;width:50.20px;color:#4c5059">24</div>
<div class="ln" style="top:889.15px;left:0;width:32.20px;color:#454952">76</div>
<div class="cl" style="top:920.65px">    <span class="k">country</span><span class="p">: </span><span class="s">United States</span></div>
<div class="ln" style="top:920.65px;left:20px;width:50.20px;color:#4c5059">25</div>
<div class="ln" style="top:920.65px;left:0;width:32.20px;color:#454952">75</div>
<div class="cl" style="top:952.15px">    <span class="k">postalCode</span><span class="p">: </span><span class="s">"95814"</span></div>
<div class="ln" style="top:952.15px;left:20px;width:50.20px;color:#4c5059">26</div>
<div class="ln" style="top:952.15px;left:0;width:32.20px;color:#454952">74</div>
<div class="cl" style="top:983.65px">  <span class="k">profiles</span><span class="p">:</span></div>
<div class="ln" style="top:983.65px;left:20px;width:50.20px;color:#4c5059">27</div>
<div class="ln" style="top:983.65px;left:0;width:32.20px;color:#454952">73</div>
<div class="cl" style="top:1015.15px">    <span class="p">- </span><span class="k">network</span><span class="p">: </span><span class="s">Line</span></div>
<div class="ln" style="top:1015.15px;left:20px;width:50.20px;color:#4c5059">28</div>
<div class="ln" style="top:1015.15px;left:0;width:32.20px;color:#454952">72</div>
<div class="cl" style="top:1046.65px">      <span class="k">url</span><span class="p">: </span><span class="s u">https://line.com/PPResumeX</span></div>
<div class="ln" style="top:1046.65px;left:20px;width:50.20px;color:#4c5059">29</div>
<div class="ln" style="top:1046.65px;left:0;width:32.20px;color:#454952">71</div>
<div class="cl" style="top:1078.15px">      <span class="k">username</span><span class="p">: </span><span class="s">PPResumeX</span></div>
<div class="ln" style="top:1078.15px;left:20px;width:50.20px;color:#4c5059">30</div>
<div class="ln" style="top:1078.15px;left:0;width:32.20px;color:#454952">70</div>
<div class="cl" style="top:1109.65px">    <span class="p">- </span><span class="k">network</span><span class="p">: </span><span class="s">Twitter</span></div>
<div class="ln" style="top:1109.65px;left:20px;width:50.20px;color:#4c5059">31</div>
<div class="ln" style="top:1109.65px;left:0;width:32.20px;color:#454952">69</div>
<div class="cl" style="top:1141.15px">      <span class="k">url</span><span class="p">: </span><span class="s u">https://twitter.com/PPResumeX</span></div>
<div class="ln" style="top:1141.15px;left:20px;width:50.20px;color:#4c5059">32</div>
<div class="ln" style="top:1141.15px;left:0;width:32.20px;color:#454952">68</div>
<div class="cl" style="top:1172.65px">      <span class="k">username</span><span class="p">: </span><span class="s">PPResumeX</span></div>
<div class="ln" style="top:1172.65px;left:20px;width:50.20px;color:#4c5059">33</div>
<div class="ln" style="top:1172.65px;left:0;width:32.20px;color:#454952">67</div>
<div class="cl" style="top:1204.15px">  <span class="k">education</span><span class="p">:</span></div>
<div class="ln" style="top:1204.15px;left:20px;width:50.20px;color:#4c5059">34</div>
<div class="ln" style="top:1204.15px;left:0;width:32.20px;color:#454952">66</div>
<div class="cl" style="top:1235.65px">    <span class="p">- </span><span class="k">institution</span><span class="p">: </span><span class="s">University of Southern California</span></div>
<div class="ln" style="top:1235.65px;left:20px;width:50.20px;color:#4c5059">35</div>
<div class="ln" style="top:1235.65px;left:0;width:32.20px;color:#454952">65</div>
<div class="cl" style="top:1267.15px">      <span class="k">url</span><span class="p">: </span><span class="s u">https://www.cs.usc.edu/</span></div>
<div class="ln" style="top:1267.15px;left:20px;width:50.20px;color:#4c5059">36</div>
<div class="ln" style="top:1267.15px;left:0;width:32.20px;color:#454952">64</div>
<div class="cl" style="top:1298.65px">      <span class="c"># Valid degree options:</span></div>
<div class="ln" style="top:1298.65px;left:20px;width:50.20px;color:#4c5059">37</div>
<div class="ln" style="top:1298.65px;left:0;width:32.20px;color:#454952">63</div>
<div class="cl" style="top:1330.15px">      <span class="c">#</span></div>
<div class="ln" style="top:1330.15px;left:20px;width:50.20px;color:#4c5059">38</div>
<div class="ln" style="top:1330.15px;left:0;width:32.20px;color:#454952">62</div>
<div class="cl" style="top:1361.65px">      <span class="c"># - 'Middle School'</span></div>
<div class="ln" style="top:1361.65px;left:20px;width:50.20px;color:#4c5059">39</div>
<div class="ln" style="top:1361.65px;left:0;width:32.20px;color:#454952">61</div>
<div class="cl" style="top:1393.15px">      <span class="c"># - 'High School'</span></div>
<div class="ln" style="top:1393.15px;left:20px;width:50.20px;color:#4c5059">40</div>
<div class="ln" style="top:1393.15px;left:0;width:32.20px;color:#454952">60</div>
<div class="cl" style="top:1424.65px">      <span class="c"># - 'Diploma'</span></div>
<div class="ln" style="top:1424.65px;left:20px;width:50.20px;color:#4c5059">41</div>
<div class="ln" style="top:1424.65px;left:0;width:32.20px;color:#454952">59</div>
<div class="cl" style="top:1456.15px">      <span class="c"># - 'Associate'</span></div>
<div class="ln" style="top:1456.15px;left:20px;width:50.20px;color:#4c5059">42</div>
<div class="ln" style="top:1456.15px;left:0;width:32.20px;color:#454952">58</div>
<div class="cl" style="top:1487.65px">      <span class="c"># - 'Bachelor'</span></div>
<div class="ln" style="top:1487.65px;left:20px;width:50.20px;color:#4c5059">43</div>
<div class="ln" style="top:1487.65px;left:0;width:32.20px;color:#454952">57</div>
<div class="cl" style="top:1519.15px">      <span class="c"># - 'Master'</span></div>
<div class="ln" style="top:1519.15px;left:20px;width:50.20px;color:#4c5059">44</div>
<div class="ln" style="top:1519.15px;left:0;width:32.20px;color:#454952">56</div>
<div class="cl" style="top:1550.65px">      <span class="c"># - 'Doctor'</span></div>
<div class="ln" style="top:1550.65px;left:20px;width:50.20px;color:#4c5059">45</div>
<div class="ln" style="top:1550.65px;left:0;width:32.20px;color:#454952">55</div>
<div class="cl" style="top:1582.15px">      <span class="k">degree</span><span class="p">: </span><span class="s">Bachelor</span></div>
<div class="ln" style="top:1582.15px;left:20px;width:50.20px;color:#4c5059">46</div>
<div class="ln" style="top:1582.15px;left:0;width:32.20px;color:#454952">54</div>
<div class="cl" style="top:1613.65px">      <span class="k">area</span><span class="p">: </span><span class="s">Computer Engineering and Computer Science</span></div>
<div class="ln" style="top:1613.65px;left:20px;width:50.20px;color:#4c5059">47</div>
<div class="ln" style="top:1613.65px;left:0;width:32.20px;color:#454952">53</div>
<div class="cl" style="top:1645.15px">      <span class="k">score</span><span class="p">: </span><span class="s">"3.8"</span></div>
<div class="ln" style="top:1645.15px;left:20px;width:50.20px;color:#4c5059">48</div>
<div class="ln" style="top:1645.15px;left:0;width:32.20px;color:#454952">52</div>
<div class="cl" style="top:1676.65px">      <span class="c"># Should be a valid date string that can be parsed by `new Date(dateStr)`</span></div>
<div class="ln" style="top:1676.65px;left:20px;width:50.20px;color:#4c5059">49</div>
<div class="ln" style="top:1676.65px;left:0;width:32.20px;color:#454952">51</div>
<div class="cl" style="top:1708.15px">      <span class="c"># in JavaScript, eg. '2020-01', '2020-02-03', 'Jul 1, 2023' etc.</span></div>
<div class="ln" style="top:1708.15px;left:20px;width:50.20px;color:#4c5059">50</div>
<div class="ln" style="top:1708.15px;left:0;width:32.20px;color:#454952">50</div>
<div class="cl" style="top:1739.65px">      <span class="c">#</span></div>
<div class="ln" style="top:1739.65px;left:20px;width:50.20px;color:#4c5059">51</div>
<div class="ln" style="top:1739.65px;left:0;width:32.20px;color:#454952">49</div>
<div class="cl" style="top:1771.15px">      <span class="c"># The date part would be removed in the final output as most of the time</span></div>
<div class="ln" style="top:1771.15px;left:20px;width:50.20px;color:#4c5059">52</div>
<div class="ln" style="top:1771.15px;left:0;width:32.20px;color:#454952">48</div>
<div class="cl" style="top:1802.65px">      <span class="c"># people won't really care about the exact date for your working</span></div>
<div class="ln" style="top:1802.65px;left:20px;width:50.20px;color:#4c5059">53</div>
<div class="ln" style="top:1802.65px;left:0;width:32.20px;color:#454952">47</div>
<div class="cl" style="top:1834.15px">      <span class="c"># experience or education background, etc.</span></div>
<div class="ln" style="top:1834.15px;left:20px;width:50.20px;color:#4c5059">54</div>
<div class="ln" style="top:1834.15px;left:0;width:32.20px;color:#454952">46</div>
<div class="cl" style="top:1865.65px">      <span class="c"># ref: </span><span class="c u">https://developer.mozilla.org/en-US/docs/Web/JavaScript/Reference/Global_Objects/Date/Date</span></div>
<div class="ln" style="top:1865.65px;left:20px;width:50.20px;color:#4c5059">55</div>
<div class="ln" style="top:1865.65px;left:0;width:32.20px;color:#454952">45</div>
<div class="cl" style="top:1897.15px">      <span class="k">startDate</span><span class="p">: </span><span class="s">Sep 1, 2016</span></div>
<div class="ln" style="top:1897.15px;left:20px;width:50.20px;color:#4c5059">56</div>
<div class="ln" style="top:1897.15px;left:0;width:32.20px;color:#454952">44</div>
<div class="cl" style="top:1928.65px">      <span class="c"># Leave endDate blank to indicate "Present"</span></div>
<div class="ln" style="top:1928.65px;left:20px;width:50.20px;color:#4c5059">57</div>
<div class="ln" style="top:1928.65px;left:0;width:32.20px;color:#454952">43</div>
<div class="cl" style="top:1960.15px">      <span class="k">endDate</span><span class="p">: </span><span class="s">Jul 1, 2020</span></div>
<div class="ln" style="top:1960.15px;left:20px;width:50.20px;color:#4c5059">58</div>
<div class="ln" style="top:1960.15px;left:0;width:32.20px;color:#454952">42</div>
<div class="cl" style="top:1991.65px">      <span class="k">courses</span><span class="p">:</span></div>
<div class="ln" style="top:1991.65px;left:20px;width:50.20px;color:#4c5059">59</div>
<div class="ln" style="top:1991.65px;left:0;width:32.20px;color:#454952">41</div>
<div class="cl" style="top:2023.15px">        <span class="p">- </span><span class="s">Discrete Methods in Computer Science</span></div>
<div class="ln" style="top:2023.15px;left:20px;width:50.20px;color:#4c5059">60</div>
<div class="ln" style="top:2023.15px;left:0;width:32.20px;color:#454952">40</div>
<div class="cl" style="top:2054.65px">        <span class="p">- </span><span class="s">Programming Language Concepts</span></div>
<div class="ln" style="top:2054.65px;left:20px;width:50.20px;color:#4c5059">61</div>
<div class="ln" style="top:2054.65px;left:0;width:32.20px;color:#454952">39</div>
<div class="cl" style="top:2086.15px">        <span class="p">- </span><span class="s">Data Structures and Object-Oriented Design</span></div>
<div class="ln" style="top:2086.15px;left:20px;width:50.20px;color:#4c5059">62</div>
<div class="ln" style="top:2086.15px;left:0;width:32.20px;color:#454952">38</div>
</div>
<svg style="position:absolute;left:1724.8px;top:138.5px;" width="174.20000000000005" height="692.0" viewBox="0 0 174.20000000000005 692.0"><g opacity="0.62"><path d="M0.0 1.2h4.1M10.4 4.2h1.1M11.8 7.2h1.1M11.8 10.2h1.1M17.8 13.2h1.1M13.3 16.2h1.1M13.3 19.2h1.1M10.4 22.2h1.1M16.3 46.2h1.1M14.8 61.2h1.1M16.3 64.2h1.1M11.8 67.2h1.1M14.8 70.2h1.1M16.3 73.2h1.1M20.7 76.2h1.1M14.8 79.2h1.1M5.9 82.2h1.1M19.2 82.2h1.1M13.3 85.2h1.1M20.7 88.2h1.1M5.9 91.2h1.1M19.2 91.2h1.1M13.3 94.2h1.1M20.7 97.2h1.1M16.3 100.2h1.1M5.9 103.2h1.1M25.2 103.2h1.1M13.3 106.2h1.1M17.8 136.2h1.1M14.8 139.2h1.1M16.3 142.2h1.1M22.2 166.2h1.1M19.2 172.2h1.1M19.2 175.2h1.1M11.8 178.2h1.1M11.8 181.2h1.1M11.8 184.2h1.1M11.8 187.2h1.1M11.8 190.2h1.1M11.8 193.2h1.1M11.8 196.2h1.1M11.8 199.2h1.1M19.2 202.2h1.1M8.9 214.2h1.1M5.9 217.2h1.1M14.8 217.2h1.1M13.3 220.2h1.1M22.2 223.2h1.1M19.2 226.2h1.1M20.7 229.2h1.1M19.2 232.2h1.1M20.7 250.2h1.1M11.8 253.2h1.1M11.8 256.2h1.1M11.8 259.2h1.1M11.8 262.2h1.1M5.9 265.2h1.1M14.8 265.2h1.1M13.3 268.2h1.1M22.2 271.2h1.1M19.2 274.2h1.1M20.7 277.2h1.1M19.2 280.2h1.1M20.7 295.2h1.1M11.8 298.2h1.1M11.8 301.2h1.1M11.8 304.2h1.1M16.3 307.2h1.1M5.9 331.2h1.1M20.7 331.2h1.1M19.2 334.2h1.1M20.7 337.2h1.1M11.8 340.2h1.1M11.8 343.2h1.1M5.9 346.2h1.1M20.7 346.2h1.1M19.2 349.2h1.1M20.7 352.2h1.1M11.8 355.2h1.1M5.9 382.2h1.1M14.8 382.2h1.1M16.3 385.2h1.1M20.7 388.2h1.1M11.8 391.2h1.1M11.8 394.2h1.1M11.8 397.2h1.1M11.8 400.2h1.1M11.8 403.2h1.1M5.9 406.2h1.1M14.8 406.2h1.1M16.3 409.2h1.1M20.7 412.2h1.1M11.8 415.2h1.1M11.8 418.2h1.1M11.8 421.2h1.1M11.8 424.2h1.1M11.8 427.2h1.1M5.9 430.2h1.1M14.8 430.2h1.1M16.3 433.2h1.1M20.7 436.2h1.1M11.8 439.2h1.1M11.8 442.2h1.1M11.8 445.2h1.1M11.8 448.2h1.1M5.9 451.2h1.1M16.3 451.2h1.1M19.2 454.2h1.1M14.8 457.2h1.1M19.2 460.2h1.1M20.7 466.2h1.1M5.9 469.2h1.1M14.8 469.2h1.1M13.3 472.2h1.1M17.8 475.2h1.1M14.8 478.2h1.1M20.7 481.2h1.1M5.9 484.2h1.1M22.2 484.2h1.1M13.3 487.2h1.1M14.8 490.2h1.1M25.2 493.2h1.1M19.2 496.2h1.1M17.8 508.2h1.1M5.9 511.2h1.1M14.8 511.2h1.1M16.3 514.2h1.1M26.6 517.2h1.1M16.3 520.2h1.1M19.2 523.2h1.1M14.8 529.2h1.1M5.9 532.2h1.1M14.8 532.2h1.1M13.3 535.2h1.1M25.2 538.2h1.1M22.2 541.2h1.1M19.2 544.2h1.1M19.2 547.2h1.1M20.7 562.2h1.1M11.8 565.2h1.1M11.8 568.2h1.1M11.8 571.2h1.1M16.3 574.2h1.1M5.9 577.2h1.1M14.8 577.2h1.1M20.7 580.2h1.1M11.8 583.2h1.1M11.8 586.2h1.1M11.8 589.2h1.1M11.8 592.2h1.1M5.9 595.2h1.1M14.8 595.2h1.1M20.7 598.2h1.1M11.8 601.2h1.1M11.8 604.2h1.1M16.3 607.2h1.1M5.9 610.2h1.1M26.6 610.2h1.1M13.3 613.2h1.1M20.7 616.2h1.1M22.2 619.2h1.1M19.2 622.2h1.1M19.2 625.2h1.1M10.4 643.2h1.1M11.8 646.2h1.1M17.8 652.2h1.1M13.3 655.2h1.1M10.4 658.2h1.1M11.8 661.2h1.1M13.3 664.2h1.1M14.8 667.2h1.1M8.9 670.2h1.1M28.1 673.2h1.1M14.8 679.2h1.1M17.8 682.2h1.1M17.8 688.2h1.1" stroke="#cdd1d9" stroke-width="2.1" fill="none"/><path d="M0.0 4.2h10.0M3.0 7.2h8.5M5.9 10.2h5.6M5.9 13.2h11.5M5.9 16.2h7.1M5.9 19.2h7.1M5.9 22.2h4.1M5.9 46.2h10.0M3.0 61.2h11.5M5.9 64.2h10.0M5.9 67.2h5.6M5.9 70.2h8.5M5.9 73.2h10.0M5.9 76.2h14.4M3.0 79.2h11.5M8.9 82.2h10.0M8.9 85.2h4.1M8.9 88.2h11.5M8.9 91.2h10.0M8.9 94.2h4.1M8.9 97.2h11.5M3.0 100.2h13.0M8.9 103.2h15.9M8.9 106.2h4.1M8.9 136.2h8.5M8.9 139.2h5.6M8.9 142.2h7.1M8.9 166.2h13.0M8.9 172.2h10.0M8.9 175.2h10.0M8.9 202.2h10.0M3.0 214.2h5.6M8.9 217.2h5.6M8.9 220.2h4.1M8.9 223.2h13.0M8.9 226.2h10.0M8.9 229.2h11.5M8.9 232.2h10.0M8.9 250.2h11.5M8.9 265.2h5.6M8.9 268.2h4.1M8.9 271.2h13.0M8.9 274.2h10.0M8.9 277.2h11.5M8.9 280.2h10.0M8.9 295.2h11.5M3.0 307.2h13.0M8.9 331.2h11.5M8.9 334.2h10.0M8.9 337.2h11.5M8.9 346.2h11.5M8.9 349.2h10.0M8.9 352.2h11.5M3.0 355.2h8.5M8.9 382.2h5.6M8.9 385.2h7.1M8.9 388.2h11.5M8.9 406.2h5.6M8.9 409.2h7.1M8.9 412.2h11.5M8.9 430.2h5.6M8.9 433.2h7.1M8.9 436.2h11.5M3.0 448.2h8.5M8.9 451.2h7.1M8.9 454.2h10.0M8.9 457.2h5.6M8.9 460.2h10.0M3.0 466.2h17.4M8.9 469.2h5.6M8.9 472.2h4.1M8.9 475.2h8.5M8.9 478.2h5.6M3.0 481.2h17.4M8.9 484.2h13.0M8.9 487.2h4.1M8.9 490.2h5.6M8.9 493.2h15.9M8.9 496.2h10.0M3.0 508.2h14.4M8.9 511.2h5.6M8.9 514.2h7.1M8.9 517.2h17.4M8.9 520.2h7.1M8.9 523.2h10.0M3.0 529.2h11.5M8.9 532.2h5.6M8.9 535.2h4.1M8.9 538.2h15.9M8.9 541.2h13.0M8.9 544.2h10.0M8.9 547.2h10.0M8.9 562.2h11.5M3.0 574.2h13.0M8.9 577.2h5.6M8.9 580.2h11.5M8.9 595.2h5.6M8.9 598.2h11.5M3.0 607.2h13.0M8.9 610.2h17.4M8.9 613.2h4.1M8.9 616.2h11.5M8.9 619.2h13.0M8.9 622.2h10.0M8.9 625.2h10.0M0.0 643.2h10.0M3.0 646.2h8.5M5.9 652.2h11.5M3.0 655.2h10.0M5.9 658.2h4.1M5.9 661.2h5.6M5.9 664.2h7.1M5.9 667.2h8.5M3.0 670.2h5.6M5.9 673.2h21.9M3.0 679.2h11.5M3.0 682.2h14.4M5.9 688.2h11.5" stroke="#df4f6e" stroke-width="2.1" fill="none"/><path d="M14.8 10.2h5.6M22.2 10.2h11.5M20.7 13.2h8.5M31.1 13.2h4.1M37.0 13.2h4.1M42.9 13.2h10.0M16.3 16.2h8.5M26.6 16.2h13.0M16.3 19.2h21.8M13.3 22.2h41.1M8.9 49.2h1.1M11.8 49.2h11.5M25.2 49.2h10.0M37.0 49.2h7.0M45.9 49.2h5.6M53.3 49.2h8.5M63.6 49.2h14.4M79.9 49.2h2.6M84.4 49.2h5.6M91.8 49.2h15.9M109.5 49.2h15.9M127.3 49.2h4.1M133.2 49.2h11.5M146.5 49.2h15.9M8.9 52.2h1.1M11.8 52.2h7.0M20.7 52.2h10.0M32.6 52.2h5.6M40.0 52.2h7.0M48.8 52.2h4.1M54.8 52.2h14.5M71.0 52.2h15.9M88.8 52.2h2.6M93.2 52.2h11.5M106.6 52.2h18.9M127.3 52.2h11.5M140.6 52.2h13.0M155.4 52.2h11.5M8.9 55.2h1.1M11.8 55.2h14.5M28.1 55.2h2.6M32.6 55.2h13.0M47.4 55.2h7.0M56.2 55.2h10.0M68.1 55.2h11.5M81.4 55.2h5.6M88.8 55.2h15.9M106.6 55.2h17.4M125.8 55.2h13.0M140.6 55.2h11.5M153.9 55.2h7.1M8.9 58.2h1.1M11.8 58.2h5.6M19.2 58.2h10.0M31.1 58.2h5.6M38.5 58.2h21.9M62.2 58.2h10.0M74.0 58.2h4.1M79.9 58.2h1.1M82.9 58.2h5.6M90.3 58.2h4.1M96.2 58.2h4.1M102.1 58.2h8.5M112.5 58.2h4.1M118.4 58.2h5.6M125.8 58.2h15.9M19.2 64.2h4.1M25.2 64.2h5.6M32.6 64.2h8.5M14.8 67.2h14.5M17.8 70.2h14.5M19.2 73.2h8.5M29.6 73.2h8.5M23.7 76.2h10.0M22.2 82.2h5.6M16.3 85.2h38.1M23.7 88.2h13.0M22.2 91.2h10.0M16.3 94.2h42.6M23.7 97.2h13.0M28.1 103.2h14.5M44.4 103.2h2.6M48.8 103.2h11.5M62.2 103.2h14.4M16.3 106.2h33.7M20.7 136.2h11.5M17.8 139.2h11.5M31.1 139.2h15.9M48.8 139.2h4.1M54.8 139.2h11.5M68.1 139.2h10.0M19.2 142.2h7.1M25.2 166.2h4.1M31.1 166.2h2.6M35.5 166.2h5.6M22.2 172.2h4.1M28.1 172.2h2.6M32.6 172.2h5.6M14.8 178.2h11.5M28.1 178.2h10.0M40.0 178.2h2.6M44.4 178.2h11.5M57.7 178.2h10.0M14.8 181.2h15.9M32.6 181.2h11.5M45.9 181.2h11.5M14.8 184.2h5.6M22.2 184.2h14.5M38.5 184.2h4.1M44.4 184.2h21.8M68.1 184.2h8.5M14.8 187.2h13.0M29.6 187.2h10.0M14.8 190.2h11.5M28.1 190.2h17.4M14.8 193.2h11.5M28.1 193.2h10.0M14.8 196.2h11.5M28.1 196.2h14.5M14.8 199.2h17.4M34.0 199.2h2.6M38.5 199.2h4.1M44.4 199.2h8.5M54.8 199.2h2.6M59.2 199.2h13.0M11.8 205.2h1.1M14.8 205.2h13.0M29.6 205.2h15.9M47.4 205.2h2.6M51.8 205.2h15.9M69.6 205.2h13.0M84.4 205.2h5.6M91.8 205.2h2.6M96.2 205.2h7.0M105.1 205.2h5.6M112.5 205.2h4.1M118.4 205.2h8.5M11.8 208.2h1.1M14.8 208.2h8.5M25.2 208.2h11.5M38.5 208.2h14.5M54.8 208.2h2.6M59.2 208.2h11.5M72.5 208.2h15.9M90.3 208.2h10.0M102.1 208.2h10.0M114.0 208.2h11.5M127.3 208.2h4.1M133.2 208.2h15.9M11.8 211.2h1.1M14.8 211.2h8.5M25.2 211.2h18.9M45.9 211.2h4.1M51.8 211.2h11.5M65.1 211.2h8.5M75.5 211.2h11.5M88.8 211.2h10.0M100.6 211.2h7.0M109.5 211.2h11.5M122.8 211.2h4.1M128.8 211.2h18.9M17.8 217.2h11.5M16.3 220.2h29.2M25.2 223.2h4.1M31.1 223.2h2.6M35.5 223.2h5.6M23.7 229.2h8.5M34.0 229.2h11.5M47.4 229.2h11.5M11.8 235.2h1.1M14.8 235.2h13.0M29.6 235.2h4.1M35.5 235.2h15.9M53.3 235.2h13.0M68.1 235.2h4.1M74.0 235.2h11.5M87.3 235.2h7.1M96.2 235.2h11.5M109.5 235.2h17.4M128.8 235.2h4.1M134.7 235.2h17.4M153.9 235.2h4.1M159.8 235.2h14.0M11.8 238.2h1.1M14.8 238.2h17.4M34.0 238.2h5.6M41.4 238.2h23.3M66.6 238.2h7.1M75.5 238.2h2.6M79.9 238.2h8.5M90.3 238.2h10.0M102.1 238.2h17.4M121.4 238.2h4.1M127.3 238.2h13.0M142.1 238.2h5.6M149.5 238.2h5.6M156.9 238.2h13.0M171.7 238.2h2.2M11.8 241.2h1.1M14.8 241.2h13.0M29.6 241.2h11.5M42.9 241.2h10.0M54.8 241.2h4.1M60.7 241.2h13.0M75.5 241.2h2.6M79.9 241.2h11.5M93.2 241.2h4.1M99.2 241.2h10.0M111.0 241.2h4.1M116.9 241.2h8.5M127.3 241.2h2.6M131.7 241.2h5.6M139.1 241.2h2.6M143.6 241.2h4.1M149.5 241.2h11.5M11.8 244.2h1.1M14.8 244.2h11.5M28.1 244.2h17.4M47.4 244.2h2.6M51.8 244.2h5.6M59.2 244.2h11.5M72.5 244.2h13.0M87.3 244.2h11.5M100.6 244.2h11.5M114.0 244.2h2.6M118.4 244.2h10.0M130.2 244.2h5.6M137.6 244.2h10.0M149.5 244.2h4.1M155.4 244.2h13.0M170.2 244.2h2.6M11.8 247.2h1.1M14.8 247.2h11.5M28.1 247.2h4.1M34.0 247.2h8.5M44.4 247.2h8.5M54.8 247.2h15.9M72.5 247.2h13.0M87.3 247.2h1.1M90.3 247.2h18.9M111.0 247.2h4.1M116.9 247.2h21.9M140.6 247.2h5.6M148.0 247.2h15.9M14.8 253.2h15.9M14.8 256.2h8.5M14.8 259.2h10.0M14.8 262.2h14.5M17.8 265.2h11.5M16.3 268.2h29.2M25.2 271.2h4.1M31.1 271.2h2.6M35.5 271.2h5.6M22.2 274.2h4.1M28.1 274.2h2.6M32.6 274.2h5.6M23.7 277.2h11.5M37.0 277.2h11.5M11.8 283.2h1.1M14.8 283.2h10.0M26.6 283.2h11.5M40.0 283.2h7.0M48.8 283.2h14.5M65.1 283.2h2.6M69.6 283.2h8.5M79.9 283.2h5.6M87.3 283.2h14.5M103.6 283.2h4.1M109.5 283.2h21.9M11.8 286.2h1.1M14.8 286.2h14.5M31.1 286.2h5.6M38.5 286.2h10.0M50.3 286.2h5.6M57.7 286.2h2.6M62.2 286.2h7.1M71.0 286.2h4.1M77.0 286.2h10.0M88.8 286.2h10.0M100.6 286.2h5.6M108.0 286.2h2.6M112.5 286.2h4.1M118.4 286.2h11.5M11.8 289.2h1.1M14.8 289.2h15.9M32.6 289.2h15.9M50.3 289.2h10.0M62.2 289.2h7.1M71.0 289.2h7.1M79.9 289.2h8.5M90.3 289.2h4.1M96.2 289.2h8.5M106.6 289.2h14.4M122.8 289.2h10.0M134.7 289.2h7.0M11.8 292.2h1.1M14.8 292.2h11.5M28.1 292.2h17.4M47.4 292.2h2.6M51.8 292.2h7.1M60.7 292.2h15.9M78.4 292.2h20.4M100.6 292.2h13.0M115.4 292.2h7.1M124.3 292.2h11.5M137.6 292.2h11.5M151.0 292.2h4.1M156.9 292.2h8.5M167.2 292.2h6.6M14.8 298.2h10.0M14.8 301.2h7.0M14.8 304.2h7.0M23.7 331.2h10.0M22.2 334.2h8.5M32.6 334.2h2.6M37.0 334.2h13.0M51.8 334.2h15.9M14.8 340.2h7.0M23.7 340.2h4.1M14.8 343.2h7.0M23.7 343.2h4.1M23.7 346.2h10.0M22.2 349.2h14.5M38.5 349.2h15.9M23.7 352.2h2.6M17.8 382.2h4.1M23.7 382.2h15.9M19.2 385.2h8.5M14.8 391.2h8.5M14.8 394.2h5.6M14.8 397.2h4.1M14.8 400.2h7.0M14.8 403.2h14.5M17.8 406.2h8.5M19.2 409.2h17.4M14.8 415.2h8.5M14.8 418.2h14.5M14.8 421.2h8.5M14.8 424.2h7.0M14.8 427.2h10.0M17.8 430.2h8.5M19.2 433.2h17.4M14.8 439.2h8.5M14.8 442.2h7.0M14.8 445.2h13.0M19.2 451.2h8.5M29.6 451.2h5.6M22.2 454.2h14.5M38.5 454.2h2.6M42.9 454.2h11.5M56.2 454.2h14.4M17.8 457.2h4.1M23.7 457.2h5.6M11.8 463.2h1.1M14.8 463.2h10.0M26.6 463.2h2.6M31.1 463.2h11.5M44.4 463.2h4.1M50.3 463.2h10.0M62.2 463.2h1.1M65.1 463.2h5.6M72.5 463.2h11.5M85.8 463.2h11.5M99.2 463.2h2.6M103.6 463.2h15.9M121.4 463.2h1.1M124.3 463.2h13.0M139.1 463.2h7.1M148.0 463.2h7.1M156.9 463.2h10.0M168.7 463.2h5.1M17.8 469.2h4.1M23.7 469.2h13.0M38.5 469.2h13.0M53.3 469.2h1.1M56.2 469.2h13.0M16.3 472.2h54.4M20.7 475.2h4.1M17.8 478.2h4.1M23.7 478.2h5.6M25.2 484.2h5.6M32.6 484.2h17.4M51.8 484.2h2.6M56.2 484.2h15.9M74.0 484.2h15.9M91.8 484.2h10.0M16.3 487.2h50.0M17.8 490.2h13.0M32.6 490.2h20.4M54.8 490.2h15.9M72.5 490.2h10.0M84.4 490.2h13.0M99.2 490.2h10.0M28.1 493.2h4.1M34.0 493.2h5.6M11.8 499.2h1.1M14.8 499.2h11.5M28.1 499.2h4.1M34.0 499.2h13.0M48.8 499.2h2.6M53.3 499.2h13.0M68.1 499.2h10.0M79.9 499.2h5.6M87.3 499.2h2.6M91.8 499.2h13.0M106.6 499.2h15.9M124.3 499.2h10.0M136.2 499.2h8.5M146.5 499.2h4.1M152.4 499.2h13.0M11.8 502.2h1.1M14.8 502.2h14.5M31.1 502.2h11.5M44.4 502.2h2.6M48.8 502.2h2.6M53.3 502.2h2.6M57.7 502.2h10.0M69.6 502.2h7.0M78.4 502.2h5.6M85.8 502.2h2.6M90.3 502.2h10.0M102.1 502.2h14.4M118.4 502.2h15.9M136.2 502.2h4.1M142.1 502.2h8.5M11.8 505.2h1.1M14.8 505.2h13.0M29.6 505.2h14.4M45.9 505.2h4.1M51.8 505.2h8.5M62.2 505.2h14.4M78.4 505.2h2.6M82.9 505.2h2.6M87.3 505.2h14.5M103.6 505.2h2.6M108.0 505.2h13.0M122.8 505.2h5.6M130.2 505.2h14.4M17.8 511.2h4.1M23.7 511.2h8.5M34.0 511.2h11.5M19.2 514.2h8.5M29.6 514.2h13.0M29.6 517.2h11.5M42.9 517.2h10.0M54.8 517.2h13.0M19.2 520.2h33.7M11.8 526.2h5.6M19.2 526.2h11.5M32.6 526.2h7.0M41.4 526.2h15.9M59.2 526.2h21.9M82.9 526.2h8.5M93.2 526.2h4.1M99.2 526.2h1.1M102.1 526.2h7.0M111.0 526.2h18.9M131.7 526.2h2.6M136.2 526.2h15.9M153.9 526.2h13.0M168.7 526.2h4.1M17.8 532.2h8.5M16.3 535.2h33.7M28.1 538.2h1.1M31.1 538.2h13.0M45.9 538.2h15.9M63.6 538.2h11.5M77.0 538.2h4.1M82.9 538.2h15.9M100.6 538.2h11.5M25.2 541.2h4.1M31.1 541.2h5.6M22.2 544.2h4.1M28.1 544.2h5.6M11.8 550.2h1.1M14.8 550.2h11.5M28.1 550.2h2.6M32.6 550.2h10.0M44.4 550.2h8.5M54.8 550.2h11.5M68.1 550.2h15.9M11.8 553.2h1.1M14.8 553.2h15.9M32.6 553.2h13.0M47.4 553.2h14.4M63.6 553.2h4.1M69.6 553.2h18.9M90.3 553.2h10.0M102.1 553.2h15.9M119.9 553.2h11.5M133.2 553.2h4.1M139.1 553.2h18.9M159.8 553.2h14.0M11.8 556.2h1.1M14.8 556.2h8.5M25.2 556.2h1.1M28.1 556.2h5.6M35.5 556.2h7.1M44.4 556.2h2.6M48.8 556.2h10.0M60.7 556.2h8.5M71.0 556.2h10.0M82.9 556.2h11.5M11.8 559.2h1.1M14.8 559.2h5.6M22.2 559.2h2.6M26.6 559.2h10.0M38.5 559.2h4.1M44.4 559.2h4.1M50.3 559.2h11.5M63.6 559.2h7.0M72.5 559.2h10.0M84.4 559.2h4.1M90.3 559.2h7.0M99.2 559.2h2.6M103.6 559.2h4.1M109.5 559.2h4.1M14.8 565.2h13.0M14.8 568.2h8.5M25.2 568.2h11.5M14.8 571.2h4.1M17.8 577.2h8.5M14.8 583.2h8.5M14.8 586.2h11.5M14.8 589.2h13.0M14.8 592.2h8.5M17.8 595.2h7.1M14.8 601.2h7.0M14.8 604.2h8.5M29.6 610.2h4.1M35.5 610.2h11.5M48.8 610.2h10.0M60.7 610.2h4.1M66.6 610.2h15.9M84.4 610.2h10.0M16.3 613.2h38.1M23.7 616.2h5.6M31.1 616.2h8.5M25.2 619.2h4.1M31.1 619.2h5.6M22.2 622.2h4.1M28.1 622.2h5.6M11.8 628.2h1.1M14.8 628.2h15.9M32.6 628.2h2.6M37.0 628.2h1.1M40.0 628.2h5.6M47.4 628.2h8.5M57.7 628.2h2.6M62.2 628.2h4.1M68.1 628.2h11.5M81.4 628.2h10.0M93.2 628.2h4.1M99.2 628.2h15.9M116.9 628.2h10.0M11.8 631.2h1.1M14.8 631.2h11.5M28.1 631.2h11.5M41.4 631.2h4.1M47.4 631.2h14.4M63.6 631.2h2.6M68.1 631.2h8.5M78.4 631.2h11.5M91.8 631.2h2.6M96.2 631.2h7.0M105.1 631.2h13.0M119.9 631.2h11.5M133.2 631.2h4.1M139.1 631.2h14.4M11.8 634.2h1.1M14.8 634.2h11.5M28.1 634.2h2.6M32.6 634.2h14.4M48.8 634.2h14.5M65.1 634.2h8.5M75.5 634.2h18.9M96.2 634.2h4.1M102.1 634.2h14.4M118.4 634.2h8.5M128.8 634.2h4.1M134.7 634.2h4.1M140.6 634.2h10.0M152.4 634.2h10.0M11.8 637.2h1.1M14.8 637.2h15.9M32.6 637.2h2.6M37.0 637.2h13.0M51.8 637.2h1.1M54.8 637.2h18.9M75.5 637.2h4.1M81.4 637.2h14.4M97.7 637.2h15.9M115.4 637.2h8.5M125.8 637.2h4.1M131.7 637.2h10.0M143.6 637.2h13.0M20.7 652.2h2.6M13.3 658.2h7.0M14.8 661.2h7.0M16.3 664.2h7.0M17.8 667.2h7.1M31.1 673.2h5.6M17.8 679.2h23.3M20.7 688.2h5.6" stroke="#8fd27c" stroke-width="2.1" fill="none"/><path d="M5.9 25.2h1.1M8.9 25.2h4.1M14.8 25.2h10.0M26.6 25.2h8.5M37.0 25.2h11.5M50.3 25.2h1.1M53.3 25.2h10.0M65.1 25.2h5.6M72.5 25.2h5.6M79.9 25.2h17.4M99.2 25.2h2.6M103.6 25.2h11.5M5.9 28.2h1.1M8.9 28.2h10.0M5.9 31.2h1.1M5.9 34.2h1.1M8.9 34.2h1.1M11.8 34.2h7.0M20.7 34.2h7.1M29.6 34.2h15.9M5.9 37.2h1.1M8.9 37.2h1.1M11.8 37.2h10.0M23.7 37.2h7.0M32.6 37.2h15.9M5.9 40.2h1.1M8.9 40.2h1.1M11.8 40.2h10.0M23.7 40.2h7.0M32.6 40.2h13.0M47.4 40.2h5.6M54.8 40.2h4.1M60.7 40.2h8.5M71.0 40.2h4.1M77.0 40.2h5.6M5.9 43.2h1.1M8.9 43.2h1.1M11.8 43.2h7.0M20.7 43.2h7.1M29.6 43.2h45.5M8.9 109.2h1.1M11.8 109.2h7.0M20.7 109.2h8.5M31.1 109.2h11.5M8.9 112.2h1.1M8.9 115.2h1.1M11.8 115.2h1.1M14.8 115.2h10.0M26.6 115.2h10.0M8.9 118.2h1.1M11.8 118.2h1.1M14.8 118.2h7.0M23.7 118.2h10.0M8.9 121.2h1.1M11.8 121.2h1.1M14.8 121.2h13.0M8.9 124.2h1.1M11.8 124.2h1.1M14.8 124.2h15.9M8.9 127.2h1.1M11.8 127.2h1.1M14.8 127.2h14.5M8.9 130.2h1.1M11.8 130.2h1.1M14.8 130.2h11.5M8.9 133.2h1.1M11.8 133.2h1.1M14.8 133.2h11.5M8.9 145.2h1.1M11.8 145.2h8.5M22.2 145.2h2.6M26.6 145.2h1.1M29.6 145.2h7.0M38.5 145.2h5.6M45.9 145.2h8.5M56.2 145.2h5.6M63.6 145.2h4.1M69.6 145.2h2.6M74.0 145.2h8.5M84.4 145.2h2.6M88.8 145.2h5.6M96.2 145.2h20.4M8.9 148.2h1.1M11.8 148.2h2.6M16.3 148.2h15.9M34.0 148.2h4.1M40.0 148.2h14.4M56.2 148.2h18.9M77.0 148.2h5.6M84.4 148.2h2.6M88.8 148.2h7.1M97.7 148.2h5.6M8.9 151.2h1.1M8.9 154.2h1.1M11.8 154.2h4.1M17.8 154.2h5.6M25.2 154.2h5.6M32.6 154.2h7.0M41.4 154.2h2.6M45.9 154.2h10.0M57.7 154.2h2.6M62.2 154.2h4.1M68.1 154.2h7.1M77.0 154.2h8.5M87.3 154.2h2.6M91.8 154.2h5.6M99.2 154.2h2.6M103.6 154.2h4.1M109.5 154.2h5.6M8.9 157.2h1.1M11.8 157.2h8.5M22.2 157.2h7.1M31.1 157.2h8.5M41.4 157.2h5.6M48.8 157.2h7.1M57.7 157.2h4.1M63.6 157.2h7.0M72.5 157.2h5.6M79.9 157.2h4.1M85.8 157.2h5.6M93.2 157.2h10.0M8.9 160.2h1.1M11.8 160.2h14.5M28.1 160.2h2.6M32.6 160.2h13.0M47.4 160.2h15.9M65.1 160.2h5.6M8.9 163.2h1.1M11.8 163.2h5.6M19.2 163.2h132.8M8.9 169.2h1.1M11.8 169.2h7.0M20.7 169.2h10.0M32.6 169.2h7.0M41.4 169.2h2.6M45.9 169.2h11.5M59.2 169.2h13.0M5.9 310.2h1.1M8.9 310.2h7.1M17.8 310.2h11.5M31.1 310.2h10.0M42.9 310.2h11.5M5.9 313.2h1.1M5.9 316.2h1.1M8.9 316.2h1.1M11.8 316.2h15.9M29.6 316.2h17.4M5.9 319.2h1.1M8.9 319.2h1.1M11.8 319.2h11.5M25.2 319.2h10.0M37.0 319.2h17.4M5.9 322.2h1.1M8.9 322.2h1.1M11.8 322.2h11.5M25.2 322.2h17.4M44.4 322.2h17.4M5.9 325.2h1.1M8.9 325.2h1.1M11.8 325.2h7.0M20.7 325.2h17.4M40.0 325.2h17.4M5.9 328.2h1.1M8.9 328.2h1.1M11.8 328.2h10.0M23.7 328.2h2.6M28.1 328.2h13.0M42.9 328.2h17.4M5.9 358.2h1.1M8.9 358.2h7.1M17.8 358.2h7.1M26.6 358.2h7.0M35.5 358.2h11.5M5.9 361.2h1.1M5.9 364.2h1.1M8.9 364.2h1.1M11.8 364.2h11.5M5.9 367.2h1.1M8.9 367.2h1.1M11.8 367.2h14.5M5.9 370.2h1.1M8.9 370.2h1.1M11.8 370.2h20.4M5.9 373.2h1.1M8.9 373.2h1.1M11.8 373.2h14.5M5.9 376.2h1.1M8.9 376.2h1.1M11.8 376.2h11.5M5.9 379.2h1.1M8.9 379.2h1.1M11.8 379.2h11.5M5.9 649.2h1.1M8.9 649.2h7.1M17.8 649.2h36.6M56.2 649.2h2.6M60.7 649.2h4.1M66.6 649.2h4.1M72.5 649.2h5.6M79.9 649.2h2.6M84.4 649.2h13.0M99.2 649.2h13.0M3.0 676.2h1.1M5.9 676.2h7.1M14.8 676.2h36.6M53.3 676.2h2.6M57.7 676.2h4.1M63.6 676.2h4.1M69.6 676.2h5.6M77.0 676.2h2.6M81.4 676.2h13.0M96.2 676.2h13.0M5.9 685.2h1.1M8.9 685.2h7.1M17.8 685.2h10.0M29.6 685.2h5.6M37.0 685.2h7.0M45.9 685.2h2.6M50.3 685.2h7.0M59.2 685.2h7.0M68.1 685.2h4.1M74.0 685.2h5.6" stroke="#7e828b" stroke-width="2.1" fill="none"/><path d="M19.2 46.2h1.1M22.2 202.2h1.1M22.2 232.2h1.1M22.2 280.2h1.1M22.2 460.2h1.1M22.2 496.2h1.1M22.2 523.2h1.1M22.2 547.2h1.1M22.2 625.2h1.1" stroke="#c678dd" stroke-width="2.1" fill="none"/></g></svg>
<div style="position:absolute;left:1724.8px;top:423.0px;width:174.20000000000005px;height:3px;background:rgba(255,255,255,0.10);"></div>
<div style="position:absolute;left:1739.6px;top:434.7px;width:11.84px;height:3.4px;background:rgba(190,200,220,0.35);"></div>
<div style="position:absolute;left:1897.5px;top:138px;width:1px;height:1951.5px;background:#23262c;"></div>
<div style="position:absolute;left:1907px;top:775px;width:6.2px;height:8.5px;background:#8a8d93;"></div>
<div style="position:absolute;left:1899.7px;top:801.7px;width:20.5px;height:2.8px;background:#4b77e6;"></div>
<div style="position:absolute;left:1907px;top:803.5px;width:6.2px;height:7.5px;background:#8a8d93;"></div>
<div style="position:absolute;left:1921.5px;top:138px;width:1918.5px;height:1951.5px;background:#e9e9ed;"></div>
<div style="position:absolute;left:2210px;top:176px;width:1340px;height:1906px;background:#fff;box-shadow:0 0 12px 2px rgba(0,0,0,.28)"></div>
<div style="position:absolute;left:1921.5px;top:138px;width:1918.5px;height:48px;background:#f9f9fb;box-shadow:0 1.5px 0 #b8b8bc,0 3px 3px rgba(0,0,0,.08)"></div>
<svg style="position:absolute;left:1930px;top:150px;" width="28" height="24" viewBox="0 0 28 24"><rect x="3.3" y="3.3" width="21.4" height="17.6" rx="3.6" fill="none" stroke="#3a3a40" stroke-width="2.6"/><path d="M11.6 3.3V20.9" stroke="#3a3a40" stroke-width="2.4"/><path d="M5.8 8H9.2M5.8 11.2H9.2M5.8 14.4H9.2" stroke="#3a3a40" stroke-width="1.2"/></svg>
<svg style="position:absolute;left:2020px;top:149px;" width="28" height="27" viewBox="0 0 28 27"><circle cx="11.2" cy="11" r="7.4" fill="none" stroke="#3a3a40" stroke-width="2.6"/><path d="M16.6 16.6L24.6 24" stroke="#3a3a40" stroke-width="3" stroke-linecap="round"/></svg>
<svg style="position:absolute;left:2068px;top:148px;" width="26" height="28" viewBox="0 0 26 28"><path d="M12.7 25V4.4M3.8 13L12.7 4.2L21.6 13" fill="none" stroke="#9c9ca2" stroke-width="2.5" stroke-linecap="round" stroke-linejoin="round"/></svg>
<div style="position:absolute;left:2101.6px;top:147px;width:1.3px;height:29.5px;background:#b4b4b9;"></div>
<svg style="position:absolute;left:2111px;top:148px;" width="26" height="28" viewBox="0 0 26 28"><path d="M12.8 3.6V24M3.8 15.4L12.8 24.4L21.8 15.4" fill="none" stroke="#3a3a40" stroke-width="2.5" stroke-linecap="round" stroke-linejoin="round"/></svg>
<div style="position:absolute;left:2148.5px;top:143px;width:82.8px;height:38px;box-sizing:border-box;border:1.3px solid #b6b6bb;border-radius:3.5px;background:#fff"></div>
<div style="position:absolute;left:2743.2px;top:160.4px;width:17.4px;height:2.4px;background:#3a3a40;border-radius:1.2px"></div>
<div style="position:absolute;left:2773px;top:144px;width:1.3px;height:32.7px;background:#b4b4b9;"></div>
<div style="position:absolute;left:2784.6px;top:160.7px;width:21px;height:2.4px;background:#3a3a40;border-radius:1.2px"></div>
<div style="position:absolute;left:2793.9px;top:151.8px;width:2.4px;height:20.2px;background:#3a3a40;border-radius:1.2px"></div>
<div style="position:absolute;left:2821px;top:141.3px;width:209px;height:41.3px;border-radius:3.5px;background:#d0d0d6"></div>
<svg style="position:absolute;left:2999px;top:155px;" width="20" height="16" viewBox="0 0 20 16"><path d="M3.4 4.6L8.6 10L13.8 4.6" fill="none" stroke="#15141a" stroke-width="3" stroke-linecap="round" stroke-linejoin="round"/></svg>
<svg style="position:absolute;left:3614px;top:148px;" width="30" height="27" viewBox="0 0 30 27"><path d="M17.5 6.8H13.2L10.6 4.4H6.2C4.6 4.4 4.2 5 4.2 6.4V20C4.2 21.6 4.8 22.2 6.4 22.2H22.8C24.4 22.2 25 21.6 25 20V11" fill="none" stroke="#3a3a40" stroke-width="2.5" stroke-linejoin="round" stroke-linecap="round"/><path d="M21.2 14.4V3.6M17.8 6.6L21.2 3.2L24.6 6.6" fill="none" stroke="#3a3a40" stroke-width="1.7" stroke-linecap="round" stroke-linejoin="round"/></svg>
<svg style="position:absolute;left:3659px;top:148px;" width="30" height="28" viewBox="0 0 30 28"><path d="M8.2 9.6V3.4H20.4V9.6" fill="none" stroke="#3a3a40" stroke-width="1.8"/><path d="M2.6 11.6C2.6 10.2 3.4 9.4 4.8 9.4H23.8C25.2 9.4 26 10.2 26 11.6V19.4H21V14.8H7.6V19.4H2.6Z" fill="#3a3a40"/><rect x="7.8" y="15" width="13" height="9.6" fill="none" stroke="#3a3a40" stroke-width="1.8"/><path d="M10.6 18.4H18M10.6 21.4H18" stroke="#3a3a40" stroke-width="1.5"/></svg>
<svg style="position:absolute;left:3704px;top:148px;" width="30" height="27" viewBox="0 0 30 27"><path d="M17.2 6.8H13.2L10.6 4.4H6.2C4.6 4.4 4.2 5 4.2 6.4V20C4.2 21.6 4.8 22.2 6.4 22.2H22.8C24.4 22.2 25 21.6 25 20V9C25 7.4 24.4 6.8 23.4 6.8" fill="none" stroke="#3a3a40" stroke-width="2.5" stroke-linejoin="round" stroke-linecap="round"/><path d="M20.2 2.6V13.4M16.8 10.2L20.2 13.6L23.6 10.2" fill="none" stroke="#3a3a40" stroke-width="1.7" stroke-linecap="round" stroke-linejoin="round"/></svg>
<svg style="position:absolute;left:3756px;top:150px;" width="16" height="26" viewBox="0 0 16 26"><path d="M2 2.4H13.6V23L7.8 17.4L2 23Z" fill="#3a3a40"/></svg>
<div style="position:absolute;left:3789.2px;top:145.3px;width:1.3px;height:33.2px;background:#b4b4b9;"></div>
<svg style="position:absolute;left:3804px;top:151px;" width="26" height="23" viewBox="0 0 26 23"><path d="M4.2 4.2L11.8 11.6L4.2 19M13.4 4.2L21 11.6L13.4 19" fill="none" stroke="#3a3a40" stroke-width="2.7" stroke-linecap="round" stroke-linejoin="round"/></svg>
<svg style="position:absolute;left:2660px;top:431px;" width="17" height="25" viewBox="0 0 17 25"><rect x="1.2" y="1.2" width="14.4" height="22.2" rx="2.6" fill="#000"/><rect x="3.6" y="3.8" width="9.6" height="14" fill="#fff"/><circle cx="8.4" cy="20.4" r="1.4" fill="#fff"/></svg>
<svg style="position:absolute;left:2882px;top:434px;" width="25" height="20" viewBox="0 0 25 20"><rect x="2.2" y="2.8" width="20.2" height="14.4" rx="2" fill="none" stroke="#000" stroke-width="2.3"/><path d="M3 5L12.3 12L21.6 5" fill="none" stroke="#000" stroke-width="2.3" stroke-linejoin="round"/></svg>
<svg style="position:absolute;left:2489px;top:462px;" width="25" height="24" viewBox="0 0 25 24"><g fill="none" stroke="#000" stroke-width="3.3" stroke-linecap="round"><path d="M11.6 15.2C9.6 13.2 9.6 10.4 11.6 8.4L14.8 5.2C16.8 3.2 19.8 3.2 21.4 5C23 6.8 23 9.6 21.2 11.4L19.6 13"/><path d="M13.2 9.2C15.2 11.2 15.2 14 13.2 16L10 19.2C8 21.2 5.2 21.2 3.6 19.4C2 17.6 2 14.8 3.8 13L5.4 11.4"/></g></svg>
<svg style="position:absolute;left:2871px;top:463px;" width="22" height="22" viewBox="0 0 22 22"><rect x="1" y="1.2" width="19.8" height="19.8" rx="4" fill="#000"/><path d="M10.9 5C7 5 3.8 7.4 3.8 10.4C3.8 13 6 15.2 9.2 15.7C9.9 15.9 9.8 16.2 9.7 17L9.6 17.8C9.6 18.1 9.8 18.2 10.1 18C11.4 17.3 15.6 14.7 17 12.9C17.7 12.1 18 11.3 18 10.4C18 7.4 14.8 5 10.9 5Z" fill="#fff"/><text x="5.3" y="12.3" font-family="Liberation Sans" font-weight="700" font-size="4.6" fill="#000">LINE</text></svg>
<svg style="position:absolute;left:3098px;top:463px;" width="24" height="21" viewBox="0 0 24 21"><path d="M21.6 5.2C21.6 5.4 21.6 5.6 21.6 5.8C21.6 12.2 16.8 19.4 8 19.4C5.4 19.4 2.8 18.6 0.8 17.2C1.2 17.2 1.6 17.3 2 17.3C4.2 17.3 6.2 16.5 7.8 15.2C5.8 15.2 4 13.8 3.4 11.9C3.7 12 4 12 4.3 12C4.7 12 5.2 11.9 5.6 11.8C3.4 11.4 1.8 9.4 1.8 7.1C2.4 7.5 3.2 7.7 4 7.7C2.8 6.8 1.9 5.3 1.9 3.7C1.9 2.8 2.1 2 2.6 1.3C4.9 4.2 8.4 6.1 12.4 6.3C12.3 5.9 12.3 5.6 12.3 5.2C12.3 2.6 14.4 0.4 17 0.4C18.4 0.4 19.6 1 20.5 1.9C21.6 1.7 22.6 1.3 23.5 0.8C23.2 1.9 22.4 2.8 21.4 3.4C22.4 3.3 23.2 3 24 2.7C23.4 3.7 22.6 4.5 21.6 5.2Z" fill="#000"/></svg>
<div style="position:absolute;left:2305.6px;top:630.2px;width:1149.6px;height:1.6px;background:#5a5a5a;"></div>
<div style="position:absolute;left:2304.9px;top:660.70px;width:13.4px;height:13.4px;box-sizing:border-box;border:2.1px solid #0d0d0d;border-radius:50%"></div>
<div style="position:absolute;left:2304.9px;top:691.60px;width:13.4px;height:13.4px;box-sizing:border-box;border:2.1px solid #0d0d0d;border-radius:50%"></div>
<div style="position:absolute;left:2304.9px;top:722.00px;width:13.4px;height:13.4px;box-sizing:border-box;border:2.1px solid #0d0d0d;border-radius:50%"></div>
<div style="position:absolute;left:2304.9px;top:752.30px;width:13.4px;height:13.4px;box-sizing:border-box;border:2.1px solid #0d0d0d;border-radius:50%"></div>
<div style="position:absolute;left:2305.6px;top:838.9000000000001px;width:1149.6px;height:1.6px;background:#5a5a5a;"></div>
<div style="position:absolute;left:2304.9px;top:923.10px;width:13.4px;height:13.4px;box-sizing:border-box;border:2.1px solid #0d0d0d;border-radius:50%"></div>
<div style="position:absolute;left:2304.9px;top:950.30px;width:13.4px;height:13.4px;box-sizing:border-box;border:2.1px solid #0d0d0d;border-radius:50%"></div>
<div style="position:absolute;left:2304.9px;top:977.50px;width:13.4px;height:13.4px;box-sizing:border-box;border:2.1px solid #0d0d0d;border-radius:50%"></div>
<div style="position:absolute;left:2305.6px;top:1133.8px;width:1149.6px;height:1.6px;background:#5a5a5a;"></div>
<div style="position:absolute;left:2304.9px;top:1218.00px;width:13.4px;height:13.4px;box-sizing:border-box;border:2.1px solid #0d0d0d;border-radius:50%"></div>
<div style="position:absolute;left:2304.9px;top:1245.10px;width:13.4px;height:13.4px;box-sizing:border-box;border:2.1px solid #0d0d0d;border-radius:50%"></div>
<div style="position:absolute;left:2304.9px;top:1272.20px;width:13.4px;height:13.4px;box-sizing:border-box;border:2.1px solid #0d0d0d;border-radius:50%"></div>
<div style="position:absolute;left:2304.9px;top:1299.20px;width:13.4px;height:13.4px;box-sizing:border-box;border:2.1px solid #0d0d0d;border-radius:50%"></div>
<div style="position:absolute;left:2304.9px;top:1326.20px;width:13.4px;height:13.4px;box-sizing:border-box;border:2.1px solid #0d0d0d;border-radius:50%"></div>
<div style="position:absolute;left:2304.9px;top:1448.50px;width:13.4px;height:13.4px;box-sizing:border-box;border:2.1px solid #0d0d0d;border-radius:50%"></div>
<div style="position:absolute;left:2304.9px;top:1475.60px;width:13.4px;height:13.4px;box-sizing:border-box;border:2.1px solid #0d0d0d;border-radius:50%"></div>
<div style="position:absolute;left:2304.9px;top:1502.70px;width:13.4px;height:13.4px;box-sizing:border-box;border:2.1px solid #0d0d0d;border-radius:50%"></div>
<div style="position:absolute;left:2304.9px;top:1529.70px;width:13.4px;height:13.4px;box-sizing:border-box;border:2.1px solid #0d0d0d;border-radius:50%"></div>
<div style="position:absolute;left:2305.6px;top:1631.2px;width:1149.6px;height:1.6px;background:#5a5a5a;"></div>
<div style="position:absolute;left:2305.6px;top:1784.8px;width:1149.6px;height:1.6px;background:#5a5a5a;"></div>
<div class="t" style="left:1929.30px;top:17.00px;font:normal 400 19.5px/1 'Liberation Sans', sans-serif;color:#9da1a9;transform:scaleX(0.9538);transform-origin:0 0;">yamlresume</div>
<div class="t" style="left:25.50px;top:66.00px;font:italic 700 25px/1 'Liberation Sans', sans-serif;color:#a074c4;">!</div>
<div class="t" style="left:48.40px;top:70.20px;font:normal 400 19.5px/1 'Liberation Sans', sans-serif;color:#d5d8de;transform:scaleX(1.0180);transform-origin:0 0;">resume.yml</div>
<div class="t" style="left:24.80px;top:112.90px;font:normal 400 19.5px/1 'Liberation Sans', sans-serif;color:#a6a9b0;transform:scaleX(0.9956);transform-origin:0 0;">Users</div>
<div class="t" style="left:100.90px;top:112.90px;font:normal 400 19.5px/1 'Liberation Sans', sans-serif;color:#a6a9b0;transform:scaleX(1.0086);transform-origin:0 0;">hanyu</div>
<div class="t" style="left:179.90px;top:112.90px;font:normal 400 19.5px/1 'Liberation Sans', sans-serif;color:#a6a9b0;transform:scaleX(1.0549);transform-origin:0 0;">tmp</div>
<div class="t" style="left:240.00px;top:112.90px;font:normal 400 19.5px/1 'Liberation Sans', sans-serif;color:#a6a9b0;transform:scaleX(1.0150);transform-origin:0 0;">yamlresume</div>
<div class="t" style="left:383.00px;top:108.90px;font:italic 700 24px/1 'Liberation Sans', sans-serif;color:#a074c4;">!</div>
<div class="t" style="left:406.00px;top:112.90px;font:normal 400 19.5px/1 'Liberation Sans', sans-serif;color:#a6a9b0;transform:scaleX(1.0151);transform-origin:0 0;">resume.yml</div>
<div class="t" style="left:535.70px;top:112.40px;font:normal 400 19.5px/1 'Liberation Sans', sans-serif;color:#a6a9b0;transform:scaleX(1.4043);transform-origin:0 0;">{}</div>
<div class="t" style="left:562.00px;top:112.90px;font:normal 400 19.5px/1 'Liberation Sans', sans-serif;color:#a6a9b0;transform:scaleX(1.0630);transform-origin:0 0;">content</div>
<div class="t" style="left:656.00px;top:112.40px;font:normal 400 19.5px/1 'Liberation Sans', sans-serif;color:#a6a9b0;transform:scaleX(1.3710);transform-origin:0 0;">[ ]</div>
<div class="t" style="left:684.20px;top:112.90px;font:normal 400 19.5px/1 'Liberation Sans', sans-serif;color:#a6a9b0;transform:scaleX(1.0274);transform-origin:0 0;">work</div>
<div class="t" style="left:754.30px;top:112.40px;font:normal 400 19.5px/1 'Liberation Sans', sans-serif;color:#a6a9b0;transform:scaleX(1.4120);transform-origin:0 0;">{}</div>
<div class="t" style="left:779.50px;top:112.90px;font:normal 400 19.5px/1 'Liberation Sans', sans-serif;color:#a6a9b0;">1</div>
<div class="t" style="left:813.40px;top:112.40px;font:normal 400 19.5px/1 'Liberation Sans', sans-serif;color:#a6a9b0;transform:scaleX(1.4079);transform-origin:0 0;">[ ]</div>
<div class="t" style="left:842.20px;top:112.90px;font:normal 400 19.5px/1 'Liberation Sans', sans-serif;color:#a6a9b0;transform:scaleX(1.0258);transform-origin:0 0;">keywords</div>
<div class="t" style="left:981.40px;top:112.90px;font:normal 400 19.5px/1 'Liberation Sans', sans-serif;color:#a6a9b0;transform:scaleX(0.9117);transform-origin:0 0;">0</div>
<div class="t" style="left:1968.20px;top:70.80px;font:italic 400 19.5px/1 'Liberation Sans', sans-serif;color:#d8b57d;transform:scaleX(1.0619);transform-origin:0 0;">resume.pdf</div>
<div class="t" style="left:2079.80px;top:72.80px;font:italic 400 17.5px/1 'Liberation Sans', sans-serif;color:#c9a873;transform:scaleX(1.0427);transform-origin:0 0;">M</div>
<div class="t" style="left:1944.60px;top:113.00px;font:normal 400 19.5px/1 'Liberation Sans', sans-serif;color:#a6a9b0;transform:scaleX(1.0363);transform-origin:0 0;">docs</div>
<div class="t" style="left:2012.90px;top:113.00px;font:normal 400 19.5px/1 'Liberation Sans', sans-serif;color:#a6a9b0;transform:scaleX(1.0788);transform-origin:0 0;">static</div>
<div class="t" style="left:2086.60px;top:113.00px;font:normal 400 19.5px/1 'Liberation Sans', sans-serif;color:#a6a9b0;transform:scaleX(1.0195);transform-origin:0 0;">images</div>
<div class="t" style="left:2208.60px;top:113.00px;font:normal 400 19.5px/1 'Liberation Sans', sans-serif;color:#a6a9b0;transform:scaleX(1.0557);transform-origin:0 0;">resume.pdf</div>
<div class="t" style="left:86.40px;top:2097.40px;font:normal 400 18px/1 'Liberation Sans', sans-serif;color:#9ea2aa;transform:scaleX(1.1262);transform-origin:0 0;">fix-typo-scaliblity*</div>
<div class="t" style="left:387.50px;top:2097.40px;font:normal 400 18px/1 'Liberation Sans', sans-serif;color:#9ea2aa;transform:scaleX(1.0438);transform-origin:0 0;">Launchpad</div>
<div class="t" style="left:531.80px;top:2097.40px;font:normal 400 18px/1 'Liberation Sans', sans-serif;color:#9ea2aa;transform:scaleX(0.9785);transform-origin:0 0;">0</div>
<div class="t" style="left:574.00px;top:2097.40px;font:normal 400 18px/1 'Liberation Sans', sans-serif;color:#9ea2aa;transform:scaleX(0.9585);transform-origin:0 0;">0</div>
<div class="t" style="left:635.00px;top:2097.40px;font:normal 400 18px/1 'Liberation Sans', sans-serif;color:#9ea2aa;transform:scaleX(0.9785);transform-origin:0 0;">0</div>
<div class="t" style="left:716.00px;top:2097.40px;font:normal 400 18px/1 'Liberation Sans', sans-serif;color:#9ea2aa;transform:scaleX(1.0859);transform-origin:0 0;">-- NORMAL --</div>
<div class="t" style="left:3030.80px;top:2097.40px;font:normal 400 18px/1 'Liberation Sans', sans-serif;color:#9ea2aa;transform:scaleX(1.0658);transform-origin:0 0;">Ln 100, Col 17</div>
<div class="t" style="left:3181.00px;top:2097.40px;font:normal 400 18px/1 'Liberation Sans', sans-serif;color:#9ea2aa;transform:scaleX(1.0267);transform-origin:0 0;">Spaces: 2</div>
<div class="t" style="left:3288.70px;top:2097.40px;font:normal 400 18px/1 'Liberation Sans', sans-serif;color:#9ea2aa;transform:scaleX(1.0549);transform-origin:0 0;">UTF-8</div>
<div class="t" style="left:3368.00px;top:2097.40px;font:normal 400 18px/1 'Liberation Sans', sans-serif;color:#9ea2aa;transform:scaleX(0.9136);transform-origin:0 0;">LF</div>
<div class="t" style="left:3412.40px;top:2097.40px;font:normal 400 18px/1 'Liberation Sans', sans-serif;color:#9ea2aa;transform:scaleX(0.9814);transform-origin:0 0;">YAML</div>
<div class="t" style="left:3485.00px;top:2097.40px;font:normal 400 18px/1 'Liberation Sans', sans-serif;color:#9ea2aa;transform:scaleX(1.0485);transform-origin:0 0;">Indents: 4</div>
<div class="t" style="left:3593.40px;top:2097.40px;font:normal 400 18px/1 'Liberation Sans', sans-serif;color:#9ea2aa;transform:scaleX(1.0357);transform-origin:0 0;">JSON Resume(1.0.0)</div>
<div class="t" style="left:109.80px;top:143.40px;font:normal 400 18.6px/1 'Liberation Sans', sans-serif;color:#7b7f88;transform:scaleX(1.0061);transform-origin:0 0;">JSON Resume - JSON résumé files (schema.json)</div>
<div class="t" style="left:2209.50px;top:153.00px;font:normal 400 18px/1 'Liberation Sans', sans-serif;color:#111;">1</div>
<div class="t" style="left:2239.50px;top:153.00px;font:normal 400 18px/1 'Liberation Sans', sans-serif;color:#111;transform:scaleX(0.9823);transform-origin:0 0;">of 2</div>
<div class="t" style="left:2833.20px;top:153.10px;font:normal 400 18px/1 'Liberation Sans', sans-serif;color:#111;transform:scaleX(0.9963);transform-origin:0 0;">Page Fit</div>
<div class="t" style="left:2421.70px;top:338.40px;font:normal 700 56px/1 'Liberation Serif', serif;color:#0b0b0b;-webkit-text-stroke:.15px;transform:scaleX(0.9951);transform-origin:0 0;">Andy Dufresne</div>
<div class="t" style="left:2810.30px;top:338.40px;font:normal 400 56px/1 'Liberation Serif', serif;color:#0b0b0b;-webkit-text-stroke:.3px;">|</div>
<div class="t" style="left:2835.40px;top:338.40px;font:normal 400 56px/1 'Liberation Serif', serif;color:#222;-webkit-text-stroke:.3px;">Headed for the Pacific</div>
<div class="t" style="left:2562.50px;top:402.80px;font:normal 400 24.8px/1 'Liberation Serif', serif;color:#0b0b0b;-webkit-text-stroke:.3px;transform:scaleX(0.9858);transform-origin:0 0;">123 Main Street – Sacramento – California, United States, 95814</div>
<div class="t" style="left:2682.00px;top:434.20px;font:normal 400 24.8px/1 'Liberation Serif', serif;color:#0b0b0b;-webkit-text-stroke:.3px;transform:scaleX(0.9208);transform-origin:0 0;">(213) 555-9876</div>
<div class="t" style="left:2849.40px;top:435.60px;font:normal 400 24.8px/1 'Liberation Serif', serif;color:#0b0b0b;-webkit-text-stroke:.3px;">•</div>
<div class="t" style="left:2912.00px;top:434.20px;font:normal 400 24.8px/1 'Liberation Serif', serif;color:#0b0b0b;-webkit-text-stroke:.3px;transform:scaleX(0.9967);transform-origin:0 0;">hi@ppresume.com</div>
<div class="t" style="left:2519.40px;top:463.40px;font:normal 400 24.8px/1 'Liberation Serif', serif;color:#0b0b0b;-webkit-text-stroke:.3px;transform:scaleX(1.0157);transform-origin:0 0;">https://ppresume.com/gallery</div>
<div class="t" style="left:2838.60px;top:465.00px;font:normal 400 24.8px/1 'Liberation Serif', serif;color:#0b0b0b;-webkit-text-stroke:.3px;">•</div>
<div class="t" style="left:2899.00px;top:463.40px;font:normal 400 24.8px/1 'Liberation Serif', serif;color:#0b0b0b;-webkit-text-stroke:.3px;transform:scaleX(0.9580);transform-origin:0 0;">@PPResumeX</div>
<div class="t" style="left:3065.50px;top:465.00px;font:normal 400 24.8px/1 'Liberation Serif', serif;color:#0b0b0b;-webkit-text-stroke:.3px;">•</div>
<div class="t" style="left:3128.50px;top:463.40px;font:normal 400 24.8px/1 'Liberation Serif', serif;color:#0b0b0b;-webkit-text-stroke:.3px;transform:scaleX(0.9580);transform-origin:0 0;">@PPResumeX</div>
<div class="t" style="left:2306.40px;top:595.20px;font:normal 700 32.4px/1 'Liberation Serif', serif;color:#0b0b0b;-webkit-text-stroke:.15px;transform:scaleX(0.9677);transform-origin:0 0;">Basics</div>
<div class="t" style="left:2331.20px;top:652.80px;font:normal 400 24.8px/1 'Liberation Serif', serif;color:#0b0b0b;-webkit-text-stroke:.3px;transform:scaleX(1.0156);transform-origin:0 0;">Computer Science major with strong foundation in data structures, algorithms, and software development</div>
<div class="t" style="left:2331.20px;top:683.70px;font:normal 400 24.8px/1 'Liberation Serif', serif;color:#0b0b0b;-webkit-text-stroke:.3px;transform:scaleX(1.0029);transform-origin:0 0;">Pixel perfect full stack web developer, specialised in creating high-quality, visually appealing websites</div>
<div class="t" style="left:2331.20px;top:714.10px;font:normal 400 24.8px/1 'Liberation Serif', serif;color:#0b0b0b;-webkit-text-stroke:.3px;transform:scaleX(0.9861);transform-origin:0 0;">Experiened in databases (SQL, NoSQL), familiar with server-side technologies (Node.js, Express, etc.)</div>
<div class="t" style="left:2331.20px;top:744.40px;font:normal 400 24.8px/1 'Liberation Serif', serif;color:#0b0b0b;-webkit-text-stroke:.3px;transform:scaleX(1.0121);transform-origin:0 0;">Team player, with detail-oriented mindset and a keen eye for design and user experiences</div>
<div class="t" style="left:2306.40px;top:803.80px;font:normal 700 32.4px/1 'Liberation Serif', serif;color:#0b0b0b;-webkit-text-stroke:.15px;transform:scaleX(0.9599);transform-origin:0 0;">Education</div>
<div class="t" style="left:2306.40px;top:854.00px;font:normal 700 24.8px/1 'Liberation Serif', serif;color:#0b0b0b;-webkit-text-stroke:.15px;transform:scaleX(0.9795);transform-origin:0 0;">University of Southern California</div>
<div class="t" style="left:3206.90px;top:854.00px;font:normal 700 24.8px/1 'Liberation Serif', serif;color:#0b0b0b;-webkit-text-stroke:.15px;transform:scaleX(1.0039);transform-origin:0 0;">https://www.cs.usc.edu/</div>
<div class="t" style="left:2306.40px;top:883.90px;font:italic 400 24.8px/1 'Liberation Serif', serif;color:#0b0b0b;-webkit-text-stroke:.3px;transform:scaleX(0.9474);transform-origin:0 0;">Bachelor, Computer Engineering and Computer Science, Score: 3.8</div>
<div class="t" style="left:3269.20px;top:883.90px;font:italic 400 24.8px/1 'Liberation Serif', serif;color:#0b0b0b;-webkit-text-stroke:.3px;transform:scaleX(0.9186);transform-origin:0 0;">Sep 2016 – Jul 2020</div>
<div class="t" style="left:2331.20px;top:916.80px;font:normal 400 22.5px/1 'Liberation Serif', serif;color:#0b0b0b;-webkit-text-stroke:.3px;transform:scaleX(1.0082);transform-origin:0 0;">Developed proficiency in programming languages such as Java, C++, and Python</div>
<div class="t" style="left:2331.20px;top:944.00px;font:normal 400 22.5px/1 'Liberation Serif', serif;color:#0b0b0b;-webkit-text-stroke:.3px;transform:scaleX(1.0223);transform-origin:0 0;">Gained hands-on experience in software development through various projects and assignments</div>
<div class="t" style="left:2331.20px;top:971.20px;font:normal 400 22.5px/1 'Liberation Serif', serif;color:#0b0b0b;-webkit-text-stroke:.3px;transform:scaleX(1.0244);transform-origin:0 0;">Strong communication and teamwork skills acquired through group projects and presentations</div>
<div class="t" style="left:2306.40px;top:998.20px;font:normal 400 22.5px/1 'Liberation Serif', serif;color:#0b0b0b;-webkit-text-stroke:.3px;transform:scaleX(1.0370);transform-origin:0 0;"><b>Courses</b>:  Discrete Methods in Computer Science, Programming Language Concepts, Data Structures and Object-Oriented</div>
<div class="t" style="left:2306.40px;top:1025.00px;font:normal 400 22.5px/1 'Liberation Serif', serif;color:#0b0b0b;-webkit-text-stroke:.3px;transform:scaleX(1.0215);transform-origin:0 0;">Design, Operating Systems, Computer Architecture, Database Systems, Computer Networking, Introduction to the Theory of</div>
<div class="t" style="left:2306.40px;top:1051.60px;font:normal 400 22.5px/1 'Liberation Serif', serif;color:#0b0b0b;-webkit-text-stroke:.3px;transform:scaleX(1.0112);transform-origin:0 0;">Computing</div>
<div class="t" style="left:2306.40px;top:1099.20px;font:normal 700 32.4px/1 'Liberation Serif', serif;color:#0b0b0b;-webkit-text-stroke:.15px;transform:scaleX(0.9697);transform-origin:0 0;">Work</div>
<div class="t" style="left:2306.40px;top:1148.80px;font:normal 700 24.8px/1 'Liberation Serif', serif;color:#0b0b0b;-webkit-text-stroke:.15px;transform:scaleX(0.9422);transform-origin:0 0;">PPResume</div>
<div class="t" style="left:3232.20px;top:1148.80px;font:normal 700 24.8px/1 'Liberation Serif', serif;color:#0b0b0b;-webkit-text-stroke:.15px;transform:scaleX(0.9683);transform-origin:0 0;">https://ppresume.com</div>
<div class="t" style="left:2306.40px;top:1179.60px;font:italic 400 24.8px/1 'Liberation Serif', serif;color:#0b0b0b;-webkit-text-stroke:.3px;transform:scaleX(0.9546);transform-origin:0 0;">Senior Software Engineer</div>
<div class="t" style="left:3275.50px;top:1179.60px;font:italic 400 24.8px/1 'Liberation Serif', serif;color:#0b0b0b;-webkit-text-stroke:.3px;transform:scaleX(0.9199);transform-origin:0 0;">Dec 2022 – Present</div>
<div class="t" style="left:2331.20px;top:1211.70px;font:normal 400 22.5px/1 'Liberation Serif', serif;color:#0b0b0b;-webkit-text-stroke:.3px;transform:scaleX(1.0131);transform-origin:0 0;">Developed and implemented efficient and scalable code, ensuring high-quality and maintainable web applications</div>
<div class="t" style="left:2331.20px;top:1238.80px;font:normal 400 22.5px/1 'Liberation Serif', serif;color:#0b0b0b;-webkit-text-stroke:.3px;transform:scaleX(1.0270);transform-origin:0 0;">Collaborated with cross-functional teams to gather project requirements and translate them into technical solutions</div>
<div class="t" style="left:2331.20px;top:1265.90px;font:normal 400 22.5px/1 'Liberation Serif', serif;color:#0b0b0b;-webkit-text-stroke:.3px;transform:scaleX(1.0225);transform-origin:0 0;">Conducted thorough testing and debugging to identify and resolve any issues or bugs in the software</div>
<div class="t" style="left:2331.20px;top:1292.90px;font:normal 400 22.5px/1 'Liberation Serif', serif;color:#0b0b0b;-webkit-text-stroke:.3px;transform:scaleX(1.0115);transform-origin:0 0;">Actively participated in code reviews, providing valuable feedback to improve code quality and adherence to best practices</div>
<div class="t" style="left:2331.20px;top:1319.90px;font:normal 400 22.5px/1 'Liberation Serif', serif;color:#0b0b0b;-webkit-text-stroke:.3px;transform:scaleX(1.0219);transform-origin:0 0;">Mentored and guided junior developers, fostering a collaborative and growth-oriented team environment</div>
<div class="t" style="left:2306.40px;top:1346.80px;font:normal 400 22.5px/1 'Liberation Serif', serif;color:#0b0b0b;-webkit-text-stroke:.3px;"><b>Keywords</b>: Scalability, Growth, Quality, Mentorship</div>
<div class="t" style="left:2306.40px;top:1379.40px;font:normal 700 24.8px/1 'Liberation Serif', serif;color:#0b0b0b;-webkit-text-stroke:.15px;transform:scaleX(0.9422);transform-origin:0 0;">PPResume</div>
<div class="t" style="left:3232.20px;top:1379.40px;font:normal 700 24.8px/1 'Liberation Serif', serif;color:#0b0b0b;-webkit-text-stroke:.15px;transform:scaleX(0.9683);transform-origin:0 0;">https://ppresume.com</div>
<div class="t" style="left:2306.40px;top:1409.90px;font:italic 400 24.8px/1 'Liberation Serif', serif;color:#0b0b0b;-webkit-text-stroke:.3px;transform:scaleX(0.9612);transform-origin:0 0;">Software Engineer</div>
<div class="t" style="left:3262.30px;top:1409.90px;font:italic 400 24.8px/1 'Liberation Serif', serif;color:#0b0b0b;-webkit-text-stroke:.3px;transform:scaleX(0.9094);transform-origin:0 0;">Sep 2020 – Dec 2022</div>
<div class="t" style="left:2331.20px;top:1442.20px;font:normal 400 22.5px/1 'Liberation Serif', serif;color:#0b0b0b;-webkit-text-stroke:.3px;transform:scaleX(1.0139);transform-origin:0 0;">Created reusable React components to ensure code efficiency and maintainability</div>
<div class="t" style="left:2331.20px;top:1469.30px;font:normal 400 22.5px/1 'Liberation Serif', serif;color:#0b0b0b;-webkit-text-stroke:.3px;transform:scaleX(1.0138);transform-origin:0 0;">Integrated with RESTful APIs to fetch and display dynamic data on the frontend</div>
<div class="t" style="left:2331.20px;top:1496.40px;font:normal 400 22.5px/1 'Liberation Serif', serif;color:#0b0b0b;-webkit-text-stroke:.3px;transform:scaleX(1.0170);transform-origin:0 0;">Implemented client-side routing using React Router for smooth navigation between pages</div>
<div class="t" style="left:2331.20px;top:1523.40px;font:normal 400 22.5px/1 'Liberation Serif', serif;color:#0b0b0b;-webkit-text-stroke:.3px;transform:scaleX(1.0188);transform-origin:0 0;">Actively participated in Agile development methodologies, attending daily stand-up meetings and sprint planning sessions</div>
<div class="t" style="left:2306.40px;top:1550.40px;font:normal 400 22.5px/1 'Liberation Serif', serif;color:#0b0b0b;-webkit-text-stroke:.3px;transform:scaleX(0.9678);transform-origin:0 0;"><b>Keywords</b>: RESTful, React, Agile</div>
<div class="t" style="left:2306.40px;top:1596.80px;font:normal 700 32.4px/1 'Liberation Serif', serif;color:#0b0b0b;-webkit-text-stroke:.15px;transform:scaleX(0.9591);transform-origin:0 0;">Languages</div>
<div class="t" style="left:2306.40px;top:1653.80px;font:normal 400 24.8px/1 'Liberation Serif', serif;color:#0b0b0b;-webkit-text-stroke:.3px;transform:scaleX(0.9877);transform-origin:0 0;"><b>English</b>: Native or Bilingual Proficiency</div>
<div class="t" style="left:3119.70px;top:1653.80px;font:normal 400 24.8px/1 'Liberation Serif', serif;color:#0b0b0b;-webkit-text-stroke:.3px;transform:scaleX(0.9480);transform-origin:0 0;"><b>Keywords</b>: TOEFL 110, IELTS 7.5</div>
<div class="t" style="left:2306.40px;top:1690.70px;font:normal 400 24.8px/1 'Liberation Serif', serif;color:#0b0b0b;-webkit-text-stroke:.3px;"><b>Chinese</b>: Elementary Proficiency</div>
<div class="t" style="left:2306.40px;top:1750.10px;font:normal 700 32.4px/1 'Liberation Serif', serif;color:#0b0b0b;-webkit-text-stroke:.15px;transform:scaleX(0.9532);transform-origin:0 0;">Skills</div>
<div class="t" style="left:2306.40px;top:1807.40px;font:normal 400 24.8px/1 'Liberation Serif', serif;color:#0b0b0b;-webkit-text-stroke:.3px;transform:scaleX(0.9951);transform-origin:0 0;"><b>Web Development</b>: Expert</div>
<div class="t" style="left:2970.90px;top:1807.40px;font:normal 400 24.8px/1 'Liberation Serif', serif;color:#0b0b0b;-webkit-text-stroke:.3px;transform:scaleX(0.9756);transform-origin:0 0;"><b>Keywords</b>: Python, Ruby, CSS, React, JavaScript</div>
<div class="t" style="left:2306.40px;top:1843.70px;font:normal 400 24.8px/1 'Liberation Serif', serif;color:#0b0b0b;-webkit-text-stroke:.3px;transform:scaleX(1.0066);transform-origin:0 0;"><b>DevOps</b>: Intermediate</div>
<div class="t" style="left:2907.70px;top:1843.70px;font:normal 400 24.8px/1 'Liberation Serif', serif;color:#0b0b0b;-webkit-text-stroke:.3px;transform:scaleX(0.9917);transform-origin:0 0;"><b>Keywords</b>: Python, Kubernetes, Docker, Shell, Ansible</div>
<div class="t" style="left:2306.40px;top:1880.40px;font:normal 400 24.8px/1 'Liberation Serif', serif;color:#0b0b0b;-webkit-text-stroke:.3px;transform:scaleX(1.0155);transform-origin:0 0;"><b>Design</b>: Intermediate</div>
<div class="t" style="left:3077.50px;top:1880.40px;font:normal 400 24.8px/1 'Liberation Serif', serif;color:#0b0b0b;-webkit-text-stroke:.3px;transform:scaleX(0.9915);transform-origin:0 0;"><b>Keywords</b>: Sketch, Figma, Photoshop</div>
<div class="t" style="left:3428.60px;top:1971.00px;font:italic 400 24.8px/1 'Liberation Serif', serif;color:#0b0b0b;-webkit-text-stroke:.3px;transform:scaleX(0.8331);transform-origin:0 0;">1/2</div>
<div style="position:absolute;left:0;top:0;width:3840px;height:40px;box-sizing:border-box;border-top:1.3px solid rgba(255,255,255,.42);border-radius:15px 15px 0 0"></div>
</div></body></html>
